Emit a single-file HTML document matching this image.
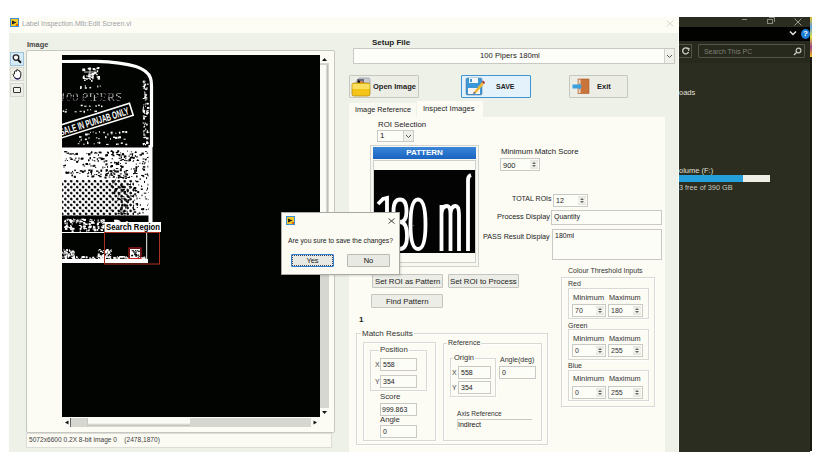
<!DOCTYPE html>
<html><head><meta charset="utf-8">
<style>
*{margin:0;padding:0;box-sizing:border-box}
html,body{width:817px;height:468px;overflow:hidden;background:#fff;font-family:"Liberation Sans",sans-serif;color:#1e1e1e}
.a{position:absolute}
.t{position:absolute;white-space:pre;line-height:10px;font-size:8px}
.box{position:absolute;background:#fdfdf8;border:1px solid #c9cac6}
.btn{position:absolute;background:#ecede6;border:1px solid #c4c5be;border-radius:1px}
.grp{position:absolute;border:1px solid #d8d9d2;box-shadow:inset 1px 1px 0 #fff, 1px 1px 0 #fff}
.spin{position:absolute;width:8px;top:1px;bottom:1px;right:1px;background:linear-gradient(#e4e6de,#f4f5ef 50%,#e4e6de)}
.spin:before{content:"";position:absolute;left:2px;top:2px;border-left:2px solid transparent;border-right:2px solid transparent;border-bottom:2px solid #666}
.spin:after{content:"";position:absolute;left:2px;bottom:2px;border-left:2px solid transparent;border-right:2px solid transparent;border-top:2px solid #666}
</style></head><body>
<!-- window -->
<div class="a" style="left:9px;top:17px;width:670px;height:16px;background:#fdfdf6"></div>
<div class="a" style="left:9px;top:33px;width:670px;height:419px;background:#eef1e7"></div><div class="a" style="left:678px;top:33px;width:1px;height:419px;background:#fafaf6"></div>
<!-- title icon -->
<svg class="a" style="left:10px;top:18px" width="9" height="9"><rect x="0" y="0" width="9" height="9" fill="#3c8ed6"/><rect x="1" y="1" width="7" height="7" fill="#f0c828"/><path d="M2 2.5 L6.5 4.5 L2 6.5 Z" fill="#202020"/><rect x="6" y="6" width="2" height="2" fill="#e06010"/></svg>
<div class="t" style="left:22px;top:19px;font-size:7px;color:#9ea2a4">Label Inspection.Mlb:Edit Screen.vi</div>
<svg class="a" style="left:666px;top:20px" width="8" height="7"><path d="M0.5 0.5 L7.5 6.5 M7.5 0.5 L0.5 6.5" stroke="#d4d4cc" stroke-width="0.9"/></svg>

<!-- dark explorer -->
<div class="a" style="left:679px;top:17px;width:131px;height:435px;background:#2a2d1f"></div>
<div class="a" style="left:679px;top:27px;width:131px;height:14px;background:#020300"></div><div class="a" style="left:679px;top:41px;width:131px;height:22px;background:#27291d"></div>
<div class="a" style="left:810px;top:17px;width:2px;height:434px;background:#1a1a10"></div><div class="a" style="left:810px;top:17px;width:2px;height:40px;background:linear-gradient(#f0c020,#60a0e0,#e0e040,#a04080,#f0c020)"></div>


<!-- explorer details -->
<div class="a" style="left:742px;top:19px;width:5px;height:1px;background:#8a8b80"></div>
<div class="a" style="left:767px;top:19px;width:6px;height:5px;border:1px solid #8a8b80"></div><div class="a" style="left:769px;top:17px;width:6px;height:5px;border-top:1px solid #8a8b80;border-right:1px solid #8a8b80"></div>
<svg class="a" style="left:794px;top:18px" width="8" height="8"><path d="M0.5 0.5 L7.5 7.5 M7.5 0.5 L0.5 7.5" stroke="#9a9b90" stroke-width="1"/></svg>
<svg class="a" style="left:789px;top:30px" width="8" height="6"><path d="M1 1.5 L4 4.5 L7 1.5" stroke="#e8e8e0" stroke-width="1.5" fill="none"/></svg>
<div class="a" style="left:801px;top:29px;width:9px;height:10px;border-radius:50%;background:#1e7fd8"></div>
<div class="t" style="left:803px;top:29px;font-size:8px;font-weight:bold;color:#fff">?</div>
<div class="a" style="left:679px;top:44px;width:13px;height:14px;border:1px solid #54554a;border-left:none;border-radius:1px"></div>
<svg class="a" style="left:682px;top:47px" width="8" height="8"><path d="M6 2 A3 3 0 1 0 6.5 5" stroke="#d0d0c8" stroke-width="1.3" fill="none"/><path d="M4.5 1 L7 1.5 L6.5 4" stroke="#d0d0c8" stroke-width="1.2" fill="none"/></svg>
<div class="a" style="left:698px;top:44px;width:107px;height:14px;border:1px solid #54554a;border-radius:1px"></div>
<div class="t" style="left:704px;top:47px;font-size:6.9px;color:#7e7f74">Search This PC</div>
<svg class="a" style="left:793px;top:47px" width="9" height="9"><circle cx="5.5" cy="3.5" r="2.4" stroke="#c8c8c0" stroke-width="1.2" fill="none"/><path d="M3.8 5.2 L1 8" stroke="#c8c8c0" stroke-width="1.4"/></svg>
<div class="t" style="left:679px;top:88px;font-size:7.5px;color:#e0e0d8">oads</div>
<div class="t" style="left:679px;top:166px;font-size:7.5px;color:#e0e0d8">olume (F:)</div>
<div class="a" style="left:679px;top:175px;width:91px;height:7px;background:#eeeee6"></div>
<div class="a" style="left:679px;top:175px;width:64px;height:7px;background:#26a0da"></div>
<div class="t" style="left:679px;top:183px;font-size:7.3px;color:#c8c8c0">3 free of 390 GB</div>
<!-- LEFT image panel -->
<div class="t" style="left:27px;top:40px;font-size:7.4px;font-weight:bold;color:#464646">Image</div>
<div class="a" style="left:10px;top:52px;width:14px;height:14px;background:#d6eaf6;border:1px solid #9cc3dc"></div>
<svg class="a" style="left:10px;top:52px" width="14" height="14"><circle cx="6" cy="5.6" r="2.8" stroke="#222" stroke-width="1.3" fill="#f8f8f8"/><path d="M8 7.8 L11 10.8" stroke="#111" stroke-width="2"/></svg>
<div class="a" style="left:10px;top:67px;width:14px;height:14px;background:#eceee6;border:1px solid #d6d7d0"></div>
<svg class="a" style="left:10px;top:67px" width="14" height="14"><path d="M4.5 7 L4.5 4.5 Q5.5 3.5 6.3 4.5 L6.3 3 Q7.2 2 8 3 L8 3.6 Q9 2.8 9.6 3.8 L9.6 4.8 Q10.5 4.3 10.8 5.3 L10.8 9 Q10.5 12 7.5 12 Q5 12 4 9.5 L3 7.5 Q3.5 6.5 4.5 7 Z" stroke="#222" stroke-width="1" fill="#fff"/><path d="M5 11 Q7.5 12.8 10 11" stroke="#302070" stroke-width="1.4" fill="none"/></svg>
<div class="a" style="left:10px;top:83px;width:14px;height:14px;background:#eceee6;border:1px solid #d6d7d0"></div>
<div class="a" style="left:13px;top:87px;width:8px;height:6px;border:1.2px solid #333;border-radius:1px;background:#f4f4ee"></div>
<div class="a" style="left:26px;top:50px;width:309px;height:383px;background:#fcfcf5;border:1px solid #c6c7c0;border-radius:2px"></div>
<div class="a" style="left:62px;top:55px;width:258px;height:362px;background:#020402"></div>

<!-- label graphic -->
<svg class="a" style="left:0;top:0" width="340" height="468" viewBox="0 0 340 468"><defs><pattern id="dots" width="4.2" height="4.2" patternUnits="userSpaceOnUse" patternTransform="rotate(45)"><circle cx="2.1" cy="2.1" r="1.35" fill="#000"/></pattern><clipPath id="lc"><rect x="62" y="55" width="258" height="362"/></clipPath></defs><g clip-path="url(#lc)"><rect x="62" y="147.5" width="90" height="68" fill="#fff"/><rect x="62" y="180" width="72" height="36" fill="url(#dots)"/><g fill="#000"><rect x="64.7" y="151.3" width="2.5" height="1.0"/><rect x="64.0" y="151.2" width="2.5" height="1.0"/></g><g fill="#000"><rect x="66.5" y="152.7" width="2.5" height="1.0"/><rect x="68.9" y="153.5" width="2.5" height="1.0"/><rect x="67.9" y="152.6" width="1.0" height="1.0"/></g><g fill="#000"><rect x="71.6" y="153.3" width="2.5" height="1.0"/><rect x="70.6" y="153.3" width="1.0" height="1.5"/></g><g fill="#000"><rect x="75.4" y="153.0" width="2.5" height="2.0"/><rect x="76.0" y="152.9" width="2.0" height="1.5"/><rect x="74.3" y="154.2" width="1.0" height="1.0"/></g><g fill="#000"><rect x="86.4" y="153.0" width="1.0" height="1.0"/><rect x="88.2" y="153.3" width="1.5" height="1.5"/><rect x="88.0" y="153.4" width="2.5" height="2.0"/></g><g fill="#000"><rect x="91.0" y="151.3" width="1.5" height="2.0"/><rect x="90.1" y="152.5" width="1.5" height="1.0"/></g><g fill="#000"><rect x="94.9" y="151.9" width="1.5" height="1.0"/><rect x="95.5" y="152.6" width="2.0" height="1.0"/><rect x="94.0" y="152.6" width="1.5" height="1.0"/></g><g fill="#000"><rect x="99.5" y="152.4" width="2.0" height="1.0"/><rect x="98.5" y="151.7" width="1.0" height="1.0"/><rect x="98.0" y="154.3" width="1.0" height="1.5"/><rect x="99.0" y="151.6" width="2.5" height="1.5"/></g><g fill="#000"><rect x="105.4" y="154.8" width="1.0" height="2.0"/><rect x="105.5" y="154.1" width="2.5" height="2.0"/></g><g fill="#000"><rect x="108.0" y="151.8" width="1.0" height="2.0"/><rect x="107.3" y="152.4" width="1.0" height="1.0"/><rect x="106.9" y="151.6" width="1.0" height="1.5"/></g><g fill="#000"><rect x="111.9" y="153.5" width="1.5" height="1.5"/><rect x="112.1" y="151.5" width="2.0" height="2.0"/></g><g fill="#000"><rect x="116.4" y="154.0" width="2.0" height="1.0"/><rect x="115.8" y="151.8" width="2.5" height="1.5"/></g><g fill="#000"><rect x="118.9" y="154.9" width="1.0" height="1.5"/><rect x="118.9" y="154.6" width="1.5" height="1.0"/></g><g fill="#000"><rect x="64.8" y="160.2" width="1.0" height="1.0"/><rect x="66.9" y="160.0" width="1.0" height="1.0"/><rect x="65.8" y="158.4" width="1.0" height="1.0"/></g><g fill="#000"><rect x="71.0" y="158.4" width="1.5" height="1.5"/><rect x="69.5" y="157.4" width="2.0" height="1.0"/><rect x="70.2" y="158.9" width="2.5" height="1.0"/></g><g fill="#000"><rect x="73.7" y="159.6" width="2.0" height="1.0"/><rect x="75.0" y="157.7" width="1.5" height="1.0"/><rect x="76.1" y="160.9" width="2.0" height="2.0"/></g><g fill="#000"><rect x="78.5" y="157.5" width="1.0" height="2.0"/><rect x="81.0" y="157.6" width="2.5" height="2.0"/><rect x="80.4" y="158.4" width="2.5" height="1.0"/><rect x="77.9" y="160.2" width="1.0" height="1.0"/></g><g fill="#000"><rect x="88.0" y="159.3" width="1.5" height="2.0"/><rect x="89.5" y="157.2" width="1.5" height="2.0"/></g><g fill="#000"><rect x="94.4" y="160.5" width="1.0" height="1.0"/><rect x="93.3" y="157.1" width="2.0" height="1.0"/><rect x="93.6" y="160.1" width="1.0" height="1.0"/><rect x="91.9" y="159.5" width="1.0" height="1.0"/></g><g fill="#000"><rect x="98.4" y="157.4" width="2.5" height="1.0"/><rect x="96.8" y="158.1" width="1.0" height="2.0"/><rect x="97.7" y="160.0" width="1.0" height="2.0"/></g><g fill="#000"><rect x="100.8" y="158.1" width="2.5" height="2.0"/><rect x="102.1" y="158.0" width="2.5" height="1.5"/><rect x="103.7" y="160.6" width="1.0" height="2.0"/><rect x="100.6" y="157.5" width="2.0" height="1.5"/></g><g fill="#000"><rect x="106.3" y="160.1" width="1.0" height="1.5"/><rect x="105.0" y="160.5" width="2.0" height="1.0"/></g><g fill="#000"></g><g fill="#000"><rect x="64.7" y="164.4" width="1.0" height="1.5"/><rect x="63.1" y="165.2" width="2.0" height="1.0"/><rect x="64.5" y="165.1" width="1.5" height="1.0"/><rect x="63.5" y="166.7" width="1.0" height="1.0"/></g><g fill="#000"><rect x="82.2" y="164.3" width="1.5" height="1.0"/><rect x="83.1" y="163.7" width="1.0" height="1.5"/><rect x="83.6" y="165.5" width="1.5" height="1.0"/></g><g fill="#000"><rect x="85.5" y="163.0" width="2.5" height="2.0"/><rect x="87.4" y="164.1" width="1.0" height="1.0"/></g><g fill="#000"><rect x="89.3" y="163.2" width="1.0" height="1.5"/><rect x="90.5" y="165.1" width="1.0" height="1.5"/></g><g fill="#000"><rect x="95.2" y="167.0" width="1.0" height="1.0"/><rect x="92.6" y="165.0" width="1.0" height="2.0"/><rect x="93.4" y="164.8" width="2.0" height="2.0"/></g><g fill="#000"><rect x="102.4" y="166.5" width="1.0" height="2.0"/><rect x="104.4" y="166.9" width="1.0" height="1.0"/></g><g fill="#000"><rect x="105.6" y="163.3" width="2.0" height="1.5"/><rect x="107.1" y="165.8" width="1.0" height="2.0"/><rect x="105.6" y="164.1" width="1.0" height="1.5"/></g><g fill="#000"><rect x="116.2" y="164.1" width="1.0" height="1.0"/><rect x="117.2" y="163.0" width="1.5" height="1.0"/></g><g fill="#000"><rect x="120.0" y="165.5" width="1.0" height="1.0"/><rect x="121.0" y="165.9" width="2.5" height="2.0"/><rect x="121.3" y="165.9" width="2.0" height="1.0"/></g><g fill="#000"><rect x="65.7" y="171.9" width="2.5" height="2.0"/><rect x="65.4" y="172.2" width="1.0" height="1.0"/><rect x="65.7" y="171.3" width="1.0" height="1.0"/></g><g fill="#000"><rect x="67.0" y="172.3" width="2.5" height="1.0"/><rect x="68.2" y="171.5" width="1.0" height="2.0"/></g><g fill="#000"><rect x="72.7" y="172.6" width="1.0" height="1.0"/><rect x="72.1" y="170.9" width="1.0" height="1.5"/><rect x="70.6" y="172.0" width="1.0" height="2.0"/></g><g fill="#000"><rect x="76.0" y="172.1" width="2.5" height="1.0"/><rect x="74.3" y="169.6" width="1.5" height="1.5"/></g><g fill="#000"><rect x="79.4" y="172.9" width="1.0" height="1.0"/><rect x="79.8" y="170.2" width="2.5" height="1.5"/></g><g fill="#000"><rect x="84.4" y="169.8" width="1.0" height="2.0"/><rect x="81.8" y="170.8" width="2.5" height="2.0"/><rect x="84.7" y="170.5" width="1.0" height="1.0"/></g><g fill="#000"><rect x="88.2" y="169.5" width="2.5" height="1.5"/><rect x="88.1" y="171.8" width="1.0" height="2.0"/></g><g fill="#000"><rect x="90.2" y="171.0" width="2.0" height="2.0"/><rect x="91.1" y="169.6" width="1.5" height="2.0"/><rect x="91.1" y="172.4" width="1.0" height="1.5"/></g><g fill="#000"><rect x="98.2" y="171.9" width="1.5" height="1.5"/><rect x="96.2" y="170.6" width="2.5" height="1.0"/><rect x="96.1" y="170.7" width="1.5" height="1.0"/></g><g fill="#000"><rect x="100.7" y="169.6" width="1.5" height="2.0"/><rect x="100.5" y="169.8" width="1.5" height="2.0"/></g><g fill="#000"><rect x="106.6" y="172.8" width="2.5" height="1.0"/><rect x="105.9" y="169.2" width="2.0" height="2.0"/><rect x="105.6" y="169.6" width="1.5" height="2.0"/></g><g fill="#000"><rect x="109.3" y="170.4" width="1.5" height="1.5"/><rect x="110.4" y="172.9" width="1.5" height="2.0"/><rect x="110.0" y="170.2" width="2.5" height="2.0"/><rect x="108.0" y="171.6" width="1.0" height="1.0"/></g><g fill="#000"><rect x="114.3" y="170.3" width="2.0" height="2.0"/><rect x="113.1" y="169.8" width="1.0" height="1.0"/><rect x="113.9" y="169.4" width="1.0" height="1.5"/></g><g fill="#000"><rect x="71.5" y="174.5" width="1.5" height="1.0"/><rect x="71.4" y="175.3" width="1.5" height="1.0"/><rect x="71.9" y="175.1" width="1.0" height="1.0"/></g><g fill="#000"><rect x="74.8" y="176.8" width="1.0" height="1.0"/><rect x="73.8" y="175.8" width="2.0" height="2.0"/></g><g fill="#000"><rect x="87.0" y="175.7" width="2.0" height="1.0"/><rect x="87.1" y="173.2" width="1.0" height="1.0"/></g><g fill="#000"><rect x="91.4" y="175.5" width="2.5" height="2.0"/><rect x="90.9" y="173.4" width="1.0" height="1.5"/></g><g fill="#000"><rect x="93.5" y="175.4" width="1.0" height="1.5"/><rect x="95.9" y="174.1" width="1.5" height="1.0"/><rect x="94.3" y="173.9" width="1.0" height="1.0"/></g><g fill="#000"><rect x="97.9" y="175.0" width="2.0" height="1.0"/><rect x="98.8" y="175.7" width="1.5" height="1.0"/><rect x="99.6" y="175.8" width="2.0" height="1.5"/><rect x="100.2" y="173.8" width="1.5" height="1.0"/></g><g fill="#000"><rect x="105.3" y="173.9" width="1.0" height="1.5"/><rect x="105.1" y="174.2" width="2.5" height="2.0"/><rect x="104.5" y="176.6" width="2.0" height="2.0"/><rect x="105.7" y="173.2" width="2.5" height="1.0"/></g><g fill="#000"><rect x="109.2" y="174.7" width="1.0" height="1.0"/><rect x="108.7" y="176.6" width="1.5" height="1.0"/></g><g fill="#000"><rect x="112.7" y="176.7" width="2.0" height="1.0"/><rect x="113.2" y="175.9" width="1.5" height="1.5"/><rect x="113.7" y="173.4" width="1.0" height="1.5"/><rect x="112.3" y="174.7" width="1.0" height="1.0"/></g><g fill="#000"><rect x="119.8" y="173.4" width="2.0" height="1.0"/><rect x="118.3" y="176.7" width="1.0" height="1.5"/><rect x="118.2" y="176.6" width="1.0" height="2.0"/><rect x="117.8" y="175.5" width="2.0" height="1.0"/></g><g fill="#000"><rect x="117.8" y="154.0" width="2.5" height="1.5"/><rect x="124.5" y="171.4" width="2.5" height="1.0"/><rect x="120.5" y="195.9" width="1.5" height="1.5"/><rect x="121.9" y="196.2" width="2.5" height="1.0"/><rect x="111.0" y="165.0" width="2.0" height="2.0"/><rect x="148.2" y="174.7" width="1.5" height="2.0"/><rect x="142.6" y="158.5" width="2.0" height="1.0"/><rect x="110.3" y="209.6" width="1.5" height="1.0"/><rect x="134.3" y="171.0" width="1.5" height="2.0"/><rect x="124.5" y="200.1" width="1.0" height="1.0"/><rect x="125.7" y="160.2" width="2.0" height="1.0"/><rect x="136.0" y="180.8" width="2.5" height="1.5"/><rect x="116.4" y="177.3" width="1.0" height="1.0"/><rect x="120.6" y="155.4" width="1.0" height="2.0"/><rect x="129.9" y="195.4" width="2.0" height="1.0"/><rect x="119.4" y="176.7" width="2.5" height="1.0"/><rect x="139.9" y="204.2" width="1.0" height="1.5"/><rect x="121.8" y="186.3" width="1.5" height="1.5"/><rect x="139.5" y="162.7" width="1.0" height="1.0"/><rect x="119.8" y="159.8" width="2.5" height="1.0"/><rect x="123.1" y="175.3" width="1.0" height="1.0"/><rect x="136.0" y="156.4" width="2.0" height="1.0"/><rect x="114.1" y="180.4" width="1.0" height="2.0"/><rect x="146.6" y="152.6" width="1.5" height="1.0"/><rect x="114.8" y="162.1" width="2.5" height="1.0"/><rect x="147.2" y="173.8" width="1.0" height="2.0"/><rect x="134.1" y="199.6" width="1.0" height="1.0"/><rect x="135.5" y="195.4" width="1.5" height="1.0"/><rect x="111.5" y="171.8" width="1.0" height="1.0"/><rect x="150.0" y="152.4" width="1.0" height="1.0"/><rect x="142.8" y="176.2" width="1.5" height="1.0"/><rect x="134.8" y="155.0" width="1.0" height="2.0"/><rect x="131.9" y="154.0" width="1.0" height="2.0"/><rect x="136.6" y="159.9" width="2.5" height="1.0"/><rect x="136.1" y="175.5" width="1.5" height="2.0"/><rect x="149.5" y="192.7" width="2.0" height="1.0"/><rect x="122.5" y="186.3" width="1.5" height="2.0"/><rect x="126.7" y="205.3" width="1.5" height="1.0"/><rect x="125.6" y="175.9" width="1.0" height="2.0"/><rect x="146.1" y="177.1" width="1.0" height="2.0"/><rect x="133.1" y="173.3" width="1.0" height="1.0"/><rect x="110.6" y="185.3" width="2.0" height="1.0"/><rect x="132.9" y="209.3" width="2.5" height="1.0"/><rect x="115.8" y="168.1" width="2.5" height="1.0"/><rect x="147.0" y="157.0" width="2.0" height="1.0"/><rect x="122.1" y="203.6" width="1.0" height="2.0"/><rect x="122.6" y="188.9" width="2.0" height="1.0"/><rect x="146.2" y="189.7" width="1.0" height="1.0"/><rect x="134.8" y="189.3" width="1.0" height="2.0"/><rect x="117.3" y="164.0" width="2.0" height="1.0"/><rect x="125.3" y="157.9" width="1.0" height="1.0"/><rect x="111.6" y="186.0" width="1.0" height="1.5"/><rect x="114.7" y="188.4" width="2.5" height="1.5"/><rect x="136.0" y="169.7" width="1.0" height="2.0"/><rect x="125.6" y="173.5" width="2.5" height="2.0"/><rect x="117.2" y="150.2" width="2.0" height="2.0"/><rect x="119.4" y="198.9" width="2.0" height="1.0"/><rect x="142.4" y="175.6" width="1.0" height="1.0"/><rect x="124.3" y="173.4" width="2.0" height="1.0"/><rect x="111.6" y="158.3" width="1.5" height="1.0"/><rect x="112.2" y="182.3" width="2.0" height="1.0"/><rect x="111.0" y="154.2" width="2.5" height="1.0"/><rect x="117.7" y="212.8" width="2.0" height="1.5"/><rect x="148.3" y="208.6" width="1.0" height="1.0"/><rect x="112.6" y="172.5" width="1.5" height="1.0"/><rect x="123.0" y="189.3" width="2.0" height="1.0"/><rect x="120.2" y="211.7" width="2.0" height="1.0"/><rect x="133.7" y="189.4" width="1.0" height="1.5"/><rect x="124.9" y="162.7" width="2.0" height="1.0"/><rect x="135.5" y="167.8" width="1.5" height="2.0"/><rect x="116.7" y="200.2" width="1.0" height="1.0"/><rect x="135.5" y="173.0" width="2.0" height="1.0"/><rect x="120.1" y="184.3" width="2.0" height="1.5"/><rect x="120.6" y="213.4" width="2.5" height="1.0"/><rect x="124.4" y="198.9" width="2.0" height="1.0"/><rect x="117.1" y="197.6" width="1.0" height="1.5"/><rect x="142.8" y="166.2" width="2.5" height="1.5"/><rect x="139.3" y="197.8" width="1.0" height="1.0"/><rect x="121.6" y="190.0" width="2.0" height="1.5"/><rect x="145.8" y="158.4" width="1.0" height="1.0"/><rect x="110.9" y="150.2" width="1.5" height="1.5"/><rect x="114.3" y="172.9" width="1.0" height="2.0"/><rect x="133.3" y="187.7" width="1.0" height="1.5"/><rect x="135.0" y="180.4" width="1.0" height="1.0"/><rect x="147.5" y="165.6" width="1.0" height="2.0"/><rect x="113.8" y="190.8" width="1.5" height="2.0"/><rect x="142.5" y="211.9" width="1.0" height="1.5"/><rect x="133.8" y="187.0" width="2.5" height="2.0"/><rect x="119.9" y="207.8" width="1.0" height="1.0"/><rect x="131.3" y="176.0" width="1.0" height="1.0"/><rect x="112.3" y="199.8" width="1.0" height="1.0"/><rect x="115.7" y="162.8" width="2.5" height="2.0"/><rect x="142.5" y="161.2" width="1.5" height="1.0"/><rect x="122.0" y="153.1" width="2.0" height="1.0"/><rect x="125.0" y="177.9" width="2.0" height="1.0"/><rect x="139.7" y="179.0" width="1.0" height="1.0"/><rect x="120.5" y="191.2" width="1.0" height="1.5"/><rect x="145.7" y="209.2" width="1.5" height="1.0"/><rect x="120.6" y="185.4" width="2.0" height="1.5"/><rect x="121.8" y="209.4" width="1.0" height="1.0"/><rect x="145.2" y="151.0" width="1.5" height="1.0"/><rect x="143.7" y="163.0" width="1.0" height="1.5"/><rect x="117.7" y="174.9" width="2.5" height="1.0"/><rect x="125.2" y="204.5" width="2.5" height="2.0"/><rect x="128.9" y="184.0" width="1.0" height="1.0"/><rect x="127.5" y="196.4" width="2.5" height="1.5"/><rect x="141.6" y="175.1" width="2.5" height="1.0"/><rect x="132.6" y="161.0" width="1.0" height="1.0"/><rect x="114.5" y="189.8" width="1.0" height="1.5"/><rect x="149.1" y="194.8" width="1.0" height="1.0"/><rect x="115.5" y="191.2" width="1.0" height="1.0"/><rect x="139.5" y="154.2" width="2.5" height="1.5"/><rect x="118.0" y="211.1" width="2.5" height="1.0"/><rect x="145.2" y="198.4" width="2.0" height="1.0"/><rect x="119.9" y="163.0" width="1.0" height="1.0"/><rect x="148.0" y="208.3" width="1.0" height="1.5"/><rect x="129.1" y="158.5" width="1.0" height="1.5"/><rect x="122.8" y="177.1" width="1.0" height="1.5"/><rect x="120.3" y="168.1" width="1.5" height="1.5"/><rect x="140.8" y="188.5" width="2.0" height="1.5"/><rect x="134.7" y="152.0" width="2.0" height="1.0"/><rect x="127.5" y="199.5" width="1.5" height="2.0"/><rect x="138.2" y="184.4" width="1.0" height="1.0"/><rect x="133.0" y="168.4" width="2.0" height="1.0"/><rect x="130.9" y="168.5" width="1.0" height="1.0"/><rect x="123.9" y="156.1" width="1.0" height="2.0"/><rect x="133.7" y="211.3" width="2.5" height="1.5"/><rect x="133.1" y="160.2" width="1.0" height="1.0"/><rect x="129.9" y="157.0" width="1.0" height="2.0"/><rect x="141.5" y="194.6" width="1.0" height="1.5"/><rect x="124.2" y="175.7" width="2.0" height="1.0"/><rect x="126.9" y="191.3" width="1.5" height="1.0"/><rect x="122.1" y="177.4" width="2.5" height="1.0"/><rect x="125.2" y="206.6" width="1.0" height="2.0"/><rect x="115.1" y="188.0" width="2.5" height="1.0"/><rect x="123.9" y="170.9" width="1.0" height="2.0"/><rect x="136.5" y="197.5" width="1.0" height="2.0"/><rect x="127.6" y="199.5" width="2.5" height="1.0"/><rect x="115.0" y="179.6" width="1.0" height="1.0"/><rect x="120.7" y="198.3" width="2.5" height="1.0"/><rect x="138.9" y="212.4" width="1.5" height="1.5"/><rect x="116.4" y="171.0" width="1.0" height="1.5"/><rect x="149.0" y="196.6" width="1.0" height="1.0"/><rect x="148.5" y="156.5" width="2.0" height="1.0"/><rect x="149.4" y="200.9" width="1.5" height="2.0"/><rect x="121.0" y="157.0" width="1.0" height="1.5"/><rect x="118.3" y="174.9" width="1.0" height="1.0"/><rect x="126.0" y="200.6" width="1.0" height="1.5"/><rect x="128.5" y="159.1" width="2.5" height="2.0"/><rect x="110.2" y="165.5" width="2.0" height="2.0"/><rect x="143.8" y="192.7" width="2.5" height="1.0"/><rect x="137.2" y="191.1" width="2.0" height="2.0"/><rect x="122.5" y="190.2" width="1.0" height="2.0"/><rect x="119.7" y="175.6" width="1.0" height="1.5"/><rect x="144.0" y="180.9" width="1.0" height="2.0"/><rect x="130.7" y="192.3" width="1.0" height="1.5"/><rect x="141.1" y="174.9" width="2.0" height="1.0"/><rect x="111.5" y="184.8" width="1.0" height="1.0"/><rect x="130.8" y="156.5" width="2.5" height="2.0"/><rect x="131.6" y="195.9" width="2.5" height="1.0"/><rect x="135.6" y="203.1" width="2.5" height="1.5"/><rect x="126.4" y="210.7" width="1.0" height="1.0"/><rect x="125.7" y="198.8" width="1.0" height="1.5"/><rect x="135.5" y="166.2" width="2.0" height="2.0"/><rect x="112.5" y="154.8" width="2.0" height="1.5"/><rect x="133.2" y="157.0" width="1.5" height="2.0"/><rect x="147.6" y="183.7" width="1.0" height="2.0"/><rect x="128.5" y="160.5" width="1.0" height="1.0"/><rect x="128.8" y="186.0" width="1.0" height="1.0"/><rect x="124.1" y="190.9" width="2.0" height="2.0"/><rect x="149.8" y="198.6" width="1.0" height="2.0"/><rect x="124.2" y="204.4" width="1.5" height="2.0"/><rect x="137.5" y="212.9" width="1.0" height="2.0"/><rect x="110.1" y="196.2" width="1.5" height="1.5"/><rect x="119.8" y="169.3" width="2.0" height="2.0"/><rect x="127.1" y="190.8" width="1.5" height="1.0"/><rect x="147.1" y="204.7" width="1.0" height="1.0"/><rect x="143.1" y="208.0" width="1.0" height="1.5"/><rect x="135.3" y="151.0" width="1.0" height="1.0"/><rect x="148.1" y="192.0" width="1.5" height="1.0"/><rect x="133.1" y="204.7" width="1.0" height="2.0"/><rect x="123.9" y="159.8" width="2.0" height="1.0"/><rect x="134.4" y="194.0" width="1.0" height="1.5"/><rect x="117.9" y="194.3" width="2.5" height="1.0"/><rect x="139.7" y="178.1" width="1.0" height="1.0"/><rect x="120.6" y="165.0" width="1.0" height="2.0"/><rect x="129.7" y="153.7" width="2.0" height="1.0"/><rect x="138.0" y="165.8" width="1.0" height="1.0"/><rect x="116.4" y="170.5" width="2.5" height="2.0"/><rect x="136.6" y="203.8" width="1.5" height="2.0"/><rect x="126.8" y="211.5" width="1.0" height="1.0"/><rect x="135.5" y="190.7" width="1.0" height="1.0"/><rect x="134.4" y="193.7" width="1.5" height="1.0"/><rect x="130.4" y="181.0" width="1.0" height="1.0"/><rect x="118.5" y="176.6" width="1.0" height="1.5"/><rect x="113.8" y="192.2" width="1.5" height="2.0"/><rect x="141.1" y="185.5" width="1.0" height="1.5"/><rect x="127.4" y="177.0" width="2.5" height="1.0"/><rect x="143.1" y="168.7" width="2.0" height="2.0"/><rect x="123.3" y="213.0" width="2.5" height="1.5"/><rect x="149.0" y="191.9" width="1.0" height="1.5"/><rect x="117.7" y="195.6" width="1.0" height="1.0"/><rect x="141.4" y="152.6" width="2.5" height="2.0"/><rect x="131.8" y="153.2" width="1.5" height="1.0"/><rect x="110.2" y="162.2" width="2.0" height="1.0"/><rect x="141.6" y="208.2" width="2.5" height="2.0"/><rect x="134.7" y="190.1" width="2.5" height="1.0"/><rect x="118.5" y="192.7" width="2.0" height="1.0"/><rect x="114.1" y="161.6" width="1.0" height="2.0"/><rect x="141.0" y="208.5" width="1.0" height="1.5"/><rect x="144.9" y="158.9" width="1.5" height="1.5"/><rect x="144.5" y="161.8" width="1.0" height="1.5"/><rect x="110.8" y="186.2" width="2.5" height="1.0"/><rect x="129.9" y="183.4" width="1.0" height="2.0"/><rect x="133.0" y="208.8" width="2.0" height="1.0"/><rect x="110.6" y="174.8" width="2.5" height="1.0"/><rect x="129.0" y="176.4" width="1.0" height="1.0"/><rect x="135.8" y="163.6" width="1.0" height="1.0"/><rect x="127.1" y="150.6" width="1.0" height="1.0"/><rect x="118.7" y="157.8" width="2.0" height="1.0"/><rect x="121.0" y="186.4" width="2.0" height="1.0"/><rect x="146.9" y="173.4" width="1.0" height="1.0"/><rect x="121.7" y="185.7" width="2.0" height="2.0"/><rect x="136.8" y="207.0" width="1.0" height="1.0"/><rect x="110.5" y="150.9" width="2.5" height="1.0"/><rect x="125.6" y="170.0" width="2.5" height="1.0"/><rect x="148.3" y="203.4" width="2.5" height="1.0"/><rect x="122.7" y="210.7" width="2.0" height="2.0"/><rect x="137.1" y="159.3" width="1.0" height="1.5"/><rect x="148.2" y="160.5" width="2.0" height="2.0"/><rect x="125.4" y="200.3" width="1.5" height="1.5"/><rect x="121.7" y="153.9" width="2.5" height="1.5"/><rect x="144.8" y="196.4" width="1.0" height="1.0"/><rect x="134.0" y="169.8" width="2.0" height="1.0"/><rect x="125.1" y="193.8" width="2.5" height="1.0"/><rect x="142.3" y="168.1" width="1.0" height="1.5"/><rect x="120.5" y="177.0" width="2.5" height="1.0"/><rect x="121.5" y="159.0" width="2.5" height="1.0"/><rect x="121.0" y="204.5" width="2.5" height="2.0"/><rect x="123.9" y="155.4" width="2.5" height="2.0"/><rect x="141.9" y="162.8" width="1.0" height="1.5"/><rect x="134.3" y="193.4" width="2.0" height="1.0"/><rect x="147.0" y="187.5" width="1.0" height="2.0"/><rect x="128.4" y="155.6" width="1.5" height="1.0"/><rect x="119.3" y="187.1" width="1.5" height="1.5"/><rect x="129.1" y="187.7" width="1.0" height="1.0"/><rect x="117.7" y="161.6" width="1.5" height="1.5"/><rect x="133.1" y="173.0" width="2.5" height="1.0"/><rect x="119.9" y="209.0" width="2.0" height="1.5"/><rect x="144.7" y="173.8" width="2.0" height="1.0"/><rect x="116.2" y="188.2" width="1.5" height="1.5"/><rect x="130.8" y="151.3" width="1.0" height="1.0"/><rect x="149.6" y="205.4" width="2.0" height="1.0"/><rect x="120.5" y="199.9" width="2.0" height="1.0"/><rect x="147.9" y="199.1" width="2.5" height="1.0"/><rect x="120.2" y="152.4" width="1.0" height="1.0"/></g><rect x="62" y="217" width="66" height="15" fill="#000"/><g fill="#fff"><rect x="64.1" y="220.5" width="2.0" height="2.0"/><rect x="66.6" y="223.5" width="1.0" height="2.0"/><rect x="66.5" y="222.4" width="1.0" height="1.5"/><rect x="64.9" y="219.8" width="1.0" height="2.0"/><rect x="64.5" y="223.2" width="1.5" height="1.0"/><rect x="66.7" y="219.7" width="1.0" height="1.5"/><rect x="66.6" y="218.8" width="2.5" height="1.0"/></g><g fill="#fff"><rect x="70.0" y="222.1" width="2.0" height="1.0"/><rect x="68.7" y="220.2" width="1.0" height="1.0"/><rect x="69.9" y="220.1" width="2.5" height="2.0"/><rect x="70.1" y="219.1" width="1.5" height="1.5"/><rect x="69.1" y="219.2" width="2.0" height="2.0"/></g><g fill="#fff"><rect x="73.0" y="218.6" width="1.0" height="1.0"/><rect x="71.7" y="223.1" width="1.0" height="1.5"/><rect x="73.6" y="219.3" width="2.0" height="1.0"/><rect x="73.7" y="220.6" width="1.0" height="1.0"/><rect x="72.5" y="220.4" width="1.0" height="2.0"/><rect x="71.6" y="220.5" width="1.5" height="1.0"/></g><g fill="#fff"><rect x="77.5" y="220.9" width="1.0" height="1.5"/><rect x="76.4" y="219.9" width="1.0" height="1.5"/><rect x="76.8" y="220.1" width="1.0" height="1.5"/><rect x="76.6" y="220.2" width="2.0" height="1.0"/><rect x="75.8" y="221.3" width="1.0" height="2.0"/><rect x="77.4" y="219.2" width="1.0" height="1.5"/></g><g fill="#fff"><rect x="79.5" y="220.6" width="2.0" height="1.0"/><rect x="79.1" y="222.5" width="1.5" height="1.0"/><rect x="81.4" y="218.6" width="2.5" height="1.5"/><rect x="80.2" y="220.9" width="2.5" height="1.5"/><rect x="79.4" y="220.9" width="2.0" height="1.0"/><rect x="79.6" y="219.5" width="1.0" height="1.0"/></g><g fill="#fff"><rect x="83.2" y="221.8" width="2.0" height="1.5"/><rect x="83.5" y="219.3" width="1.0" height="1.5"/><rect x="83.5" y="218.9" width="2.5" height="2.0"/><rect x="85.1" y="223.5" width="2.5" height="1.5"/><rect x="83.8" y="223.1" width="2.0" height="1.0"/><rect x="83.1" y="223.5" width="2.0" height="1.0"/></g><g fill="#fff"><rect x="89.3" y="220.5" width="1.0" height="1.5"/><rect x="88.7" y="223.2" width="1.5" height="2.0"/><rect x="89.7" y="218.9" width="1.5" height="1.0"/><rect x="89.3" y="223.3" width="1.5" height="2.0"/><rect x="88.7" y="223.4" width="1.5" height="1.0"/><rect x="89.7" y="221.2" width="2.5" height="1.0"/></g><g fill="#fff"><rect x="94.0" y="219.7" width="1.0" height="1.0"/><rect x="91.4" y="219.9" width="1.0" height="1.0"/><rect x="91.4" y="222.3" width="1.0" height="1.5"/><rect x="91.1" y="221.8" width="2.5" height="2.0"/><rect x="92.7" y="222.4" width="1.0" height="1.5"/><rect x="93.7" y="222.4" width="1.0" height="1.5"/><rect x="91.4" y="221.2" width="2.5" height="1.5"/><rect x="91.4" y="219.2" width="1.0" height="1.0"/></g><g fill="#fff"><rect x="97.6" y="219.4" width="1.0" height="2.0"/><rect x="97.5" y="221.8" width="2.5" height="1.0"/><rect x="96.8" y="223.7" width="1.5" height="1.5"/><rect x="96.9" y="223.1" width="2.0" height="1.5"/><rect x="97.8" y="223.2" width="1.0" height="1.5"/><rect x="97.1" y="223.8" width="1.5" height="1.0"/></g><g fill="#fff"><rect x="100.4" y="219.5" width="1.5" height="2.0"/><rect x="100.7" y="222.2" width="1.0" height="1.0"/><rect x="101.4" y="220.7" width="2.0" height="1.0"/><rect x="102.7" y="223.4" width="1.0" height="1.0"/><rect x="102.9" y="221.9" width="2.5" height="1.5"/><rect x="102.1" y="222.9" width="1.0" height="1.0"/><rect x="100.9" y="221.4" width="2.0" height="1.0"/><rect x="103.2" y="220.1" width="1.5" height="1.5"/><rect x="102.2" y="219.2" width="2.5" height="1.5"/></g><g fill="#fff"><rect x="115.5" y="222.6" width="1.5" height="2.0"/><rect x="115.1" y="221.6" width="2.0" height="1.0"/><rect x="115.0" y="220.5" width="2.5" height="1.5"/><rect x="115.2" y="221.1" width="1.5" height="1.0"/><rect x="114.0" y="219.7" width="2.5" height="2.0"/><rect x="116.3" y="220.7" width="1.5" height="1.0"/><rect x="115.9" y="219.8" width="2.5" height="1.5"/><rect x="114.8" y="220.1" width="1.0" height="1.5"/></g><g fill="#fff"><rect x="118.2" y="220.4" width="1.0" height="2.0"/><rect x="118.7" y="220.4" width="1.0" height="1.0"/><rect x="119.0" y="222.2" width="1.0" height="2.0"/><rect x="117.7" y="220.4" width="1.0" height="1.5"/><rect x="118.6" y="221.3" width="2.0" height="1.5"/></g><g fill="#fff"><rect x="125.7" y="221.7" width="2.0" height="2.0"/><rect x="126.0" y="221.6" width="2.0" height="1.5"/><rect x="125.8" y="221.8" width="2.0" height="2.0"/></g><g fill="#fff"><rect x="64.9" y="227.9" width="2.5" height="2.0"/><rect x="65.7" y="225.0" width="2.0" height="2.0"/><rect x="65.1" y="226.0" width="1.5" height="1.0"/><rect x="65.1" y="227.1" width="1.0" height="1.0"/><rect x="66.1" y="226.8" width="2.5" height="1.0"/><rect x="66.5" y="226.1" width="2.0" height="1.0"/><rect x="64.1" y="226.4" width="2.0" height="1.5"/></g><g fill="#fff"><rect x="72.0" y="227.8" width="2.5" height="2.0"/><rect x="69.8" y="227.0" width="2.5" height="1.5"/><rect x="70.1" y="225.1" width="1.0" height="1.0"/><rect x="68.8" y="227.1" width="2.0" height="1.0"/><rect x="71.6" y="230.3" width="2.0" height="2.0"/><rect x="70.0" y="228.4" width="2.5" height="1.5"/><rect x="70.9" y="229.1" width="1.0" height="1.0"/><rect x="69.7" y="227.0" width="1.0" height="1.5"/><rect x="70.3" y="225.6" width="1.5" height="1.5"/></g><g fill="#fff"><rect x="80.0" y="227.8" width="1.0" height="2.0"/><rect x="79.3" y="228.5" width="2.5" height="1.0"/><rect x="79.7" y="230.5" width="1.0" height="2.0"/><rect x="78.9" y="225.0" width="2.5" height="1.0"/><rect x="81.0" y="227.2" width="1.0" height="1.0"/><rect x="80.4" y="226.1" width="2.0" height="1.5"/></g><g fill="#fff"><rect x="83.5" y="226.1" width="2.5" height="1.0"/><rect x="83.5" y="227.9" width="2.5" height="1.0"/><rect x="83.1" y="225.4" width="2.5" height="2.0"/><rect x="86.1" y="228.4" width="1.0" height="1.0"/><rect x="85.6" y="228.2" width="1.0" height="1.0"/><rect x="84.3" y="225.9" width="1.5" height="1.0"/><rect x="86.2" y="230.2" width="1.0" height="1.5"/><rect x="83.7" y="228.4" width="1.0" height="1.0"/><rect x="83.8" y="227.2" width="1.0" height="2.0"/><rect x="83.2" y="226.3" width="1.0" height="1.0"/></g><g fill="#fff"><rect x="87.5" y="229.8" width="2.0" height="1.5"/><rect x="88.8" y="226.4" width="2.0" height="1.0"/><rect x="88.3" y="227.1" width="2.5" height="1.0"/><rect x="88.8" y="227.2" width="2.0" height="1.0"/><rect x="90.0" y="226.3" width="1.0" height="1.0"/><rect x="88.6" y="226.0" width="1.5" height="2.0"/><rect x="89.3" y="225.6" width="2.5" height="2.0"/><rect x="88.6" y="228.6" width="1.0" height="2.0"/></g><g fill="#fff"><rect x="92.9" y="226.6" width="1.0" height="2.0"/><rect x="92.5" y="228.7" width="1.5" height="1.0"/><rect x="93.1" y="225.7" width="1.0" height="1.5"/><rect x="93.9" y="229.3" width="2.5" height="2.0"/><rect x="93.7" y="229.4" width="1.0" height="1.0"/><rect x="93.4" y="226.2" width="2.0" height="2.0"/><rect x="94.1" y="228.2" width="1.5" height="2.0"/></g><g fill="#fff"><rect x="96.7" y="228.9" width="1.5" height="2.0"/><rect x="97.8" y="227.0" width="1.0" height="2.0"/><rect x="97.9" y="226.2" width="1.0" height="1.0"/><rect x="97.7" y="226.5" width="2.0" height="1.0"/><rect x="98.0" y="228.1" width="1.5" height="1.0"/><rect x="97.3" y="225.5" width="1.0" height="1.0"/></g><g fill="#fff"><rect x="101.7" y="227.0" width="2.5" height="1.5"/><rect x="100.4" y="229.0" width="1.0" height="1.0"/><rect x="100.8" y="229.5" width="2.0" height="1.5"/><rect x="101.0" y="229.6" width="2.0" height="1.0"/><rect x="102.9" y="226.0" width="1.5" height="1.5"/><rect x="102.8" y="225.1" width="2.0" height="1.0"/><rect x="103.1" y="227.2" width="1.0" height="1.0"/><rect x="100.8" y="226.5" width="2.5" height="1.0"/><rect x="102.2" y="225.2" width="1.0" height="1.0"/></g><rect x="62" y="232" width="86" height="1" fill="#fff"/><rect x="62" y="259" width="86" height="4" fill="#fff"/><g fill="#fff"><rect x="125.6" y="256.5" width="1.0" height="1.5"/><rect x="114.9" y="258.8" width="2.5" height="1.0"/><rect x="109.9" y="258.1" width="1.5" height="2.0"/><rect x="118.3" y="257.7" width="1.0" height="1.0"/><rect x="132.1" y="258.3" width="1.5" height="1.0"/><rect x="135.5" y="257.8" width="1.0" height="1.0"/><rect x="119.2" y="256.1" width="1.5" height="1.0"/><rect x="127.3" y="257.0" width="1.0" height="2.0"/><rect x="120.4" y="257.2" width="2.5" height="1.0"/><rect x="85.6" y="256.3" width="2.0" height="2.0"/><rect x="140.1" y="258.1" width="2.0" height="1.0"/><rect x="118.8" y="256.6" width="2.5" height="1.0"/><rect x="103.1" y="256.6" width="2.5" height="1.5"/><rect x="76.7" y="256.5" width="1.0" height="1.5"/><rect x="83.0" y="256.2" width="1.5" height="1.5"/><rect x="96.6" y="256.6" width="1.5" height="1.0"/><rect x="73.5" y="258.1" width="2.0" height="1.0"/><rect x="121.3" y="256.0" width="2.0" height="1.0"/><rect x="140.6" y="257.1" width="1.5" height="1.0"/><rect x="136.3" y="256.4" width="2.5" height="1.0"/><rect x="90.0" y="258.4" width="2.5" height="2.0"/><rect x="125.9" y="256.5" width="1.0" height="2.0"/><rect x="132.5" y="257.2" width="1.0" height="1.0"/><rect x="120.0" y="256.0" width="2.0" height="1.0"/><rect x="65.6" y="258.7" width="1.5" height="1.0"/><rect x="71.3" y="256.9" width="1.0" height="1.0"/><rect x="89.3" y="257.4" width="1.5" height="1.5"/><rect x="76.1" y="256.2" width="1.0" height="2.0"/><rect x="145.3" y="258.3" width="1.0" height="1.5"/><rect x="144.3" y="257.7" width="1.0" height="2.0"/><rect x="142.4" y="257.5" width="2.5" height="1.5"/><rect x="62.7" y="258.8" width="1.5" height="1.5"/><rect x="116.9" y="256.2" width="1.0" height="1.0"/><rect x="127.1" y="258.5" width="1.5" height="1.5"/><rect x="77.6" y="257.9" width="1.0" height="1.0"/><rect x="127.9" y="258.5" width="2.5" height="1.5"/><rect x="93.9" y="257.9" width="1.5" height="1.5"/><rect x="81.3" y="256.4" width="1.5" height="1.5"/><rect x="82.1" y="256.1" width="2.5" height="2.0"/><rect x="138.0" y="258.8" width="2.0" height="2.0"/><rect x="104.0" y="256.5" width="1.5" height="1.0"/><rect x="73.9" y="256.7" width="1.0" height="2.0"/><rect x="115.5" y="257.2" width="1.0" height="2.0"/><rect x="102.3" y="256.7" width="1.5" height="1.0"/><rect x="64.7" y="257.8" width="2.5" height="2.0"/><rect x="74.0" y="256.2" width="1.0" height="2.0"/><rect x="136.8" y="256.2" width="1.0" height="1.0"/><rect x="137.9" y="256.5" width="1.5" height="1.0"/><rect x="99.2" y="257.7" width="1.5" height="1.0"/><rect x="101.4" y="257.6" width="2.5" height="2.0"/><rect x="98.0" y="257.6" width="1.0" height="2.0"/><rect x="142.8" y="257.9" width="1.0" height="1.5"/><rect x="113.2" y="256.9" width="2.5" height="2.0"/><rect x="142.0" y="257.4" width="1.0" height="1.5"/><rect x="134.7" y="257.6" width="1.0" height="1.0"/><rect x="80.7" y="258.2" width="1.0" height="1.0"/><rect x="117.5" y="257.1" width="2.5" height="2.0"/><rect x="92.2" y="256.7" width="2.0" height="2.0"/><rect x="83.9" y="256.7" width="1.0" height="1.0"/><rect x="80.6" y="258.5" width="1.0" height="1.0"/><rect x="106.6" y="256.8" width="2.0" height="1.0"/><rect x="108.5" y="256.7" width="2.5" height="1.0"/><rect x="123.8" y="258.7" width="2.5" height="1.0"/><rect x="133.5" y="258.0" width="2.0" height="1.0"/><rect x="134.5" y="257.7" width="1.0" height="1.0"/><rect x="100.6" y="258.1" width="2.5" height="1.0"/><rect x="143.3" y="256.6" width="2.0" height="1.0"/><rect x="73.5" y="258.3" width="1.0" height="2.0"/><rect x="81.9" y="257.1" width="1.0" height="1.0"/><rect x="100.6" y="256.4" width="1.0" height="2.0"/><rect x="138.3" y="256.3" width="1.0" height="1.0"/><rect x="139.1" y="258.6" width="1.0" height="1.5"/><rect x="124.6" y="257.0" width="1.0" height="1.5"/><rect x="72.3" y="257.1" width="2.5" height="1.5"/><rect x="122.6" y="256.1" width="2.5" height="1.5"/></g><g fill="#fff"><rect x="63.2" y="253.4" width="2.5" height="1.0"/><rect x="62.4" y="256.3" width="1.0" height="1.5"/><rect x="66.3" y="254.6" width="1.0" height="2.0"/><rect x="63.4" y="249.2" width="1.0" height="1.0"/><rect x="71.6" y="250.5" width="2.5" height="1.5"/><rect x="72.5" y="254.4" width="1.0" height="1.5"/><rect x="68.5" y="254.5" width="1.5" height="2.0"/><rect x="62.2" y="251.7" width="1.0" height="2.0"/><rect x="68.0" y="256.0" width="1.0" height="1.0"/><rect x="64.2" y="255.5" width="2.5" height="2.0"/><rect x="72.1" y="256.7" width="2.0" height="2.0"/><rect x="64.8" y="256.7" width="2.5" height="1.0"/><rect x="66.3" y="253.2" width="1.5" height="1.0"/><rect x="69.1" y="249.3" width="1.0" height="1.5"/><rect x="70.7" y="251.7" width="2.0" height="2.0"/><rect x="73.2" y="251.5" width="1.5" height="2.0"/><rect x="66.0" y="249.2" width="2.0" height="1.0"/><rect x="69.6" y="254.8" width="1.0" height="1.5"/><rect x="66.6" y="249.5" width="1.5" height="1.5"/><rect x="68.8" y="253.2" width="1.0" height="1.0"/><rect x="73.0" y="256.2" width="1.0" height="1.0"/><rect x="71.3" y="254.1" width="1.0" height="1.5"/><rect x="71.5" y="255.3" width="1.0" height="1.0"/><rect x="70.2" y="251.4" width="1.5" height="1.5"/><rect x="68.1" y="254.1" width="1.5" height="2.0"/><rect x="66.0" y="254.6" width="1.5" height="2.0"/><rect x="68.0" y="256.2" width="1.0" height="1.5"/><rect x="63.8" y="250.6" width="2.0" height="2.0"/><rect x="67.3" y="253.5" width="1.5" height="1.0"/><rect x="69.0" y="250.2" width="1.5" height="1.5"/><rect x="70.7" y="253.4" width="1.5" height="1.0"/><rect x="73.1" y="253.7" width="1.0" height="1.0"/><rect x="65.7" y="251.8" width="2.0" height="1.5"/><rect x="73.6" y="254.5" width="1.0" height="2.0"/><rect x="65.8" y="250.4" width="1.5" height="1.0"/><rect x="71.1" y="254.0" width="1.0" height="1.0"/><rect x="64.6" y="252.2" width="1.0" height="1.5"/><rect x="72.4" y="254.2" width="1.0" height="1.0"/></g><g fill="#fff"><rect x="107.3" y="256.7" width="2.5" height="1.0"/><rect x="98.1" y="255.5" width="2.5" height="1.5"/><rect x="107.1" y="249.0" width="1.5" height="1.0"/><rect x="106.0" y="256.4" width="1.0" height="1.5"/><rect x="101.6" y="255.0" width="2.0" height="2.0"/><rect x="105.5" y="255.4" width="1.0" height="1.0"/><rect x="109.1" y="255.4" width="1.0" height="1.5"/><rect x="107.9" y="256.9" width="2.0" height="1.5"/><rect x="110.2" y="256.0" width="1.0" height="1.5"/><rect x="104.9" y="256.9" width="1.0" height="2.0"/><rect x="105.6" y="254.8" width="1.5" height="1.0"/><rect x="98.3" y="250.2" width="1.0" height="1.0"/><rect x="102.0" y="251.9" width="1.5" height="1.0"/><rect x="106.2" y="253.8" width="1.5" height="1.0"/><rect x="107.4" y="251.1" width="2.0" height="1.0"/><rect x="107.9" y="251.5" width="2.5" height="2.0"/><rect x="104.8" y="251.9" width="2.5" height="1.5"/><rect x="98.8" y="249.1" width="2.0" height="1.0"/><rect x="106.2" y="255.2" width="1.5" height="1.0"/><rect x="110.9" y="250.8" width="1.0" height="1.0"/><rect x="105.7" y="250.0" width="2.5" height="1.0"/><rect x="104.8" y="250.5" width="2.5" height="1.5"/><rect x="107.3" y="256.2" width="1.0" height="1.0"/><rect x="101.9" y="254.7" width="2.0" height="2.0"/><rect x="100.0" y="256.3" width="2.0" height="2.0"/><rect x="100.0" y="255.3" width="1.0" height="1.0"/><rect x="106.2" y="249.1" width="2.0" height="1.5"/><rect x="97.8" y="253.5" width="2.0" height="2.0"/><rect x="110.2" y="254.0" width="1.0" height="1.0"/><rect x="100.5" y="251.1" width="2.0" height="1.0"/><rect x="100.2" y="250.6" width="2.0" height="1.5"/><rect x="101.2" y="257.0" width="1.0" height="1.0"/><rect x="103.7" y="256.5" width="1.5" height="1.0"/><rect x="108.5" y="251.3" width="1.5" height="1.0"/><rect x="103.8" y="256.1" width="1.0" height="1.5"/><rect x="106.6" y="253.8" width="2.0" height="1.0"/><rect x="105.1" y="256.1" width="1.0" height="1.5"/><rect x="97.6" y="255.2" width="2.0" height="1.0"/><rect x="103.1" y="250.1" width="1.5" height="1.0"/><rect x="108.3" y="250.2" width="1.0" height="1.0"/><rect x="109.8" y="250.2" width="1.5" height="1.0"/><rect x="107.5" y="252.7" width="2.0" height="1.0"/><rect x="102.8" y="254.1" width="2.0" height="1.5"/><rect x="110.7" y="249.3" width="1.0" height="1.0"/></g><rect x="130" y="249" width="10" height="9" fill="#fff"/><g fill="#000"><rect x="137.3" y="254.8" width="1.0" height="1.0"/><rect x="135.0" y="251.6" width="2.0" height="1.0"/><rect x="136.8" y="250.3" width="1.5" height="1.0"/><rect x="138.0" y="250.8" width="2.0" height="1.0"/><rect x="135.2" y="250.0" width="1.0" height="1.0"/><rect x="136.1" y="253.8" width="1.0" height="1.5"/><rect x="137.7" y="256.7" width="1.0" height="1.5"/><rect x="138.8" y="256.0" width="1.0" height="1.0"/><rect x="133.2" y="251.2" width="1.5" height="1.5"/><rect x="131.6" y="250.3" width="2.5" height="1.0"/><rect x="134.3" y="253.9" width="1.5" height="1.5"/><rect x="131.1" y="254.8" width="2.0" height="1.5"/><rect x="135.4" y="254.8" width="1.5" height="2.0"/><rect x="134.4" y="253.8" width="2.0" height="1.0"/><rect x="134.1" y="252.7" width="2.0" height="1.0"/><rect x="138.2" y="254.4" width="1.0" height="1.5"/></g><path d="M60 61.5 L96 61.3 Q122 62 136 66.5 Q148 70.5 150.5 78 Q151.5 81 151.5 86 L151.5 147" stroke="#fff" stroke-width="3.2" fill="none"/><rect x="148.5" y="145" width="4" height="88" fill="#fff"/><rect x="146" y="233" width="1.2" height="30" fill="#fff" opacity="0.8"/><g fill="#fff"><rect x="93.1" y="76.5" width="1.0" height="1.0"/><rect x="92.6" y="68.1" width="2.5" height="1.0"/><rect x="96.5" y="67.6" width="2.5" height="1.5"/><rect x="93.0" y="72.8" width="1.5" height="2.0"/><rect x="97.5" y="67.0" width="2.0" height="1.5"/><rect x="91.5" y="79.9" width="1.0" height="2.0"/><rect x="87.7" y="67.8" width="2.5" height="1.5"/><rect x="91.8" y="75.8" width="1.5" height="1.0"/><rect x="92.1" y="74.1" width="1.0" height="1.5"/><rect x="86.2" y="77.9" width="1.5" height="2.0"/><rect x="91.1" y="80.0" width="1.0" height="1.5"/><rect x="90.4" y="73.9" width="1.5" height="1.0"/><rect x="92.8" y="69.0" width="2.0" height="1.0"/><rect x="92.2" y="77.8" width="1.0" height="1.5"/><rect x="88.1" y="77.8" width="2.0" height="1.0"/><rect x="88.6" y="76.1" width="2.0" height="1.0"/><rect x="87.8" y="75.6" width="2.5" height="1.5"/><rect x="89.2" y="68.1" width="2.0" height="1.5"/><rect x="98.0" y="76.0" width="2.0" height="2.0"/><rect x="93.7" y="69.3" width="2.5" height="1.0"/><rect x="82.1" y="68.7" width="2.0" height="1.0"/><rect x="92.0" y="73.8" width="2.0" height="1.5"/><rect x="82.3" y="69.6" width="2.5" height="1.5"/><rect x="82.9" y="69.3" width="2.5" height="1.5"/><rect x="96.7" y="70.3" width="1.5" height="2.0"/><rect x="83.5" y="75.3" width="1.0" height="1.0"/><rect x="84.1" y="79.5" width="1.5" height="1.5"/><rect x="96.7" y="76.3" width="2.0" height="1.5"/><rect x="82.7" y="76.8" width="2.0" height="2.0"/><rect x="92.4" y="77.5" width="1.5" height="1.0"/><rect x="88.2" y="74.5" width="2.5" height="1.0"/><rect x="97.6" y="78.1" width="2.5" height="1.5"/><rect x="83.0" y="69.6" width="1.0" height="1.0"/><rect x="94.1" y="71.9" width="2.5" height="2.0"/><rect x="89.9" y="78.7" width="1.0" height="1.0"/><rect x="91.5" y="73.0" width="2.0" height="2.0"/><rect x="88.6" y="73.2" width="1.0" height="2.0"/><rect x="88.4" y="68.8" width="1.0" height="1.0"/><rect x="93.8" y="72.2" width="1.0" height="1.5"/><rect x="90.9" y="77.0" width="2.0" height="1.0"/><rect x="83.4" y="78.0" width="2.5" height="1.0"/><rect x="83.6" y="68.1" width="1.0" height="2.0"/><rect x="82.9" y="75.9" width="1.5" height="2.0"/><rect x="95.8" y="74.2" width="2.0" height="1.0"/><rect x="98.0" y="77.6" width="1.0" height="1.5"/></g><path d="M84 72 L96 72 M86 76 L94 76 M90 67 L90 80" stroke="#fff" stroke-width="1" opacity="0.8"/><g fill="#fff"><rect x="80.0" y="87.5" width="1.5" height="1.5"/><rect x="80.2" y="86.0" width="1.5" height="2.0"/></g><g fill="#fff"><rect x="84.8" y="87.2" width="2.0" height="1.5"/><rect x="84.8" y="85.3" width="1.0" height="1.5"/></g><g fill="#fff"><rect x="89.1" y="87.3" width="1.5" height="1.0"/><rect x="90.2" y="86.8" width="1.0" height="1.5"/></g><g fill="#fff"><rect x="97.3" y="85.5" width="1.0" height="2.0"/></g><g fill="#fff"><rect x="99.8" y="85.5" width="1.0" height="1.0"/></g><text x="60" y="101" font-family="Liberation Serif" font-size="13" fill="#fff" textLength="62" lengthAdjust="spacingAndGlyphs" opacity="0.7">100 PIPERS</text><g fill="#000"><rect x="114.8" y="99.8" width="2.0" height="1.0"/><rect x="62.9" y="98.7" width="1.0" height="2.0"/><rect x="75.2" y="98.6" width="1.5" height="1.0"/><rect x="94.1" y="91.9" width="1.0" height="1.0"/><rect x="89.9" y="92.4" width="1.0" height="1.0"/><rect x="86.9" y="97.9" width="1.5" height="2.0"/><rect x="103.2" y="91.9" width="1.0" height="1.0"/><rect x="64.5" y="100.0" width="1.5" height="1.0"/><rect x="114.5" y="99.6" width="2.5" height="1.0"/><rect x="80.6" y="93.1" width="2.5" height="1.0"/><rect x="71.1" y="99.6" width="1.0" height="2.0"/><rect x="120.5" y="93.9" width="1.0" height="1.5"/><rect x="75.4" y="96.5" width="1.0" height="1.0"/><rect x="89.9" y="98.7" width="2.0" height="1.5"/><rect x="102.7" y="91.4" width="1.5" height="1.0"/><rect x="101.4" y="92.5" width="2.5" height="1.0"/><rect x="79.4" y="94.2" width="2.0" height="1.0"/><rect x="74.0" y="93.4" width="1.5" height="1.0"/><rect x="74.1" y="95.6" width="1.0" height="1.5"/><rect x="63.9" y="97.2" width="1.0" height="1.5"/><rect x="73.7" y="91.8" width="1.5" height="1.0"/><rect x="72.3" y="94.2" width="2.0" height="1.0"/><rect x="81.8" y="94.4" width="1.0" height="1.5"/><rect x="110.5" y="98.7" width="2.0" height="1.0"/><rect x="106.8" y="91.4" width="1.0" height="2.0"/><rect x="89.7" y="90.4" width="2.5" height="1.0"/><rect x="86.8" y="98.4" width="2.0" height="1.5"/><rect x="66.6" y="98.7" width="1.0" height="1.5"/><rect x="72.2" y="101.3" width="1.5" height="1.0"/><rect x="112.5" y="100.5" width="2.0" height="1.5"/><rect x="70.9" y="91.1" width="1.0" height="1.0"/><rect x="71.2" y="93.2" width="2.5" height="1.0"/><rect x="81.5" y="93.0" width="2.5" height="1.0"/><rect x="92.4" y="94.4" width="1.0" height="1.5"/><rect x="86.2" y="92.4" width="1.0" height="1.0"/><rect x="105.6" y="96.4" width="1.0" height="1.0"/><rect x="62.9" y="101.3" width="2.0" height="1.0"/><rect x="103.3" y="92.8" width="1.0" height="1.0"/><rect x="112.5" y="102.0" width="2.0" height="2.0"/><rect x="99.5" y="91.3" width="2.5" height="1.0"/><rect x="67.1" y="96.9" width="1.0" height="1.0"/><rect x="97.7" y="99.4" width="1.0" height="1.0"/><rect x="66.4" y="94.0" width="1.0" height="1.0"/><rect x="74.9" y="99.3" width="1.0" height="1.5"/><rect x="82.5" y="99.7" width="2.0" height="1.0"/><rect x="62.6" y="101.3" width="2.0" height="2.0"/><rect x="63.9" y="99.5" width="1.0" height="1.0"/><rect x="71.1" y="94.1" width="1.0" height="1.0"/><rect x="73.9" y="92.6" width="1.5" height="1.0"/><rect x="121.8" y="99.5" width="2.0" height="1.0"/><rect x="91.8" y="99.4" width="1.0" height="1.0"/><rect x="73.9" y="97.5" width="1.5" height="2.0"/><rect x="67.5" y="98.6" width="1.5" height="1.0"/><rect x="110.2" y="95.9" width="2.0" height="1.0"/><rect x="77.6" y="98.3" width="1.5" height="1.0"/><rect x="106.7" y="100.0" width="2.5" height="1.0"/><rect x="88.1" y="99.9" width="2.5" height="1.5"/><rect x="106.9" y="97.1" width="1.0" height="1.0"/><rect x="120.1" y="99.4" width="1.5" height="1.0"/><rect x="76.4" y="97.1" width="2.5" height="1.0"/><rect x="114.7" y="96.9" width="1.0" height="2.0"/><rect x="101.8" y="94.7" width="1.5" height="2.0"/><rect x="86.4" y="91.0" width="1.5" height="2.0"/><rect x="109.6" y="90.1" width="2.0" height="1.0"/><rect x="119.1" y="100.5" width="2.0" height="2.0"/><rect x="86.6" y="93.6" width="1.0" height="1.5"/><rect x="94.7" y="91.0" width="2.0" height="2.0"/><rect x="99.2" y="93.5" width="1.0" height="1.5"/><rect x="73.2" y="100.7" width="2.0" height="1.0"/><rect x="69.2" y="98.2" width="1.0" height="2.0"/><rect x="111.4" y="92.2" width="1.5" height="1.5"/><rect x="119.5" y="94.3" width="1.0" height="1.5"/><rect x="115.4" y="97.3" width="2.0" height="1.5"/><rect x="92.0" y="101.5" width="2.5" height="1.0"/><rect x="113.4" y="101.6" width="2.0" height="1.0"/><rect x="62.0" y="92.1" width="1.0" height="2.0"/><rect x="95.9" y="97.9" width="1.5" height="1.0"/><rect x="121.1" y="98.8" width="2.5" height="2.0"/><rect x="70.1" y="99.0" width="1.5" height="2.0"/><rect x="66.6" y="97.5" width="2.0" height="1.5"/><rect x="119.5" y="94.3" width="2.0" height="1.0"/><rect x="116.4" y="96.0" width="1.5" height="1.0"/><rect x="65.4" y="100.0" width="1.0" height="2.0"/><rect x="88.9" y="99.0" width="1.0" height="2.0"/><rect x="64.1" y="93.9" width="1.0" height="1.0"/><rect x="119.2" y="100.7" width="1.0" height="1.0"/><rect x="97.3" y="96.9" width="1.0" height="2.0"/><rect x="72.4" y="97.1" width="1.5" height="1.0"/><rect x="79.5" y="96.5" width="2.0" height="2.0"/><rect x="100.9" y="99.7" width="2.0" height="2.0"/><rect x="119.8" y="98.5" width="1.5" height="1.5"/><rect x="71.7" y="96.9" width="1.0" height="1.5"/><rect x="115.6" y="92.4" width="1.0" height="1.0"/><rect x="80.5" y="96.2" width="1.5" height="1.0"/><rect x="97.2" y="101.7" width="1.5" height="1.0"/><rect x="78.3" y="100.7" width="2.0" height="1.0"/><rect x="99.2" y="101.1" width="2.0" height="1.0"/><rect x="102.9" y="94.3" width="1.5" height="2.0"/><rect x="109.6" y="95.7" width="1.0" height="1.0"/><rect x="117.5" y="97.5" width="2.5" height="2.0"/><rect x="100.2" y="99.3" width="1.5" height="1.0"/><rect x="71.1" y="99.1" width="2.0" height="2.0"/><rect x="107.2" y="93.3" width="1.5" height="2.0"/><rect x="93.8" y="93.5" width="1.0" height="1.5"/><rect x="89.0" y="90.1" width="2.5" height="1.5"/><rect x="83.2" y="101.3" width="1.5" height="1.0"/><rect x="115.2" y="100.5" width="1.0" height="2.0"/><rect x="112.1" y="98.5" width="1.5" height="1.0"/><rect x="100.7" y="101.6" width="1.0" height="2.0"/><rect x="85.7" y="101.3" width="1.5" height="2.0"/><rect x="85.6" y="99.7" width="1.5" height="1.0"/><rect x="104.7" y="91.7" width="2.5" height="2.0"/><rect x="102.2" y="100.8" width="1.0" height="1.0"/><rect x="82.3" y="90.8" width="2.0" height="1.0"/><rect x="92.1" y="100.2" width="1.0" height="2.0"/><rect x="86.2" y="96.9" width="1.5" height="1.0"/><rect x="71.1" y="98.1" width="1.0" height="1.0"/><rect x="115.9" y="100.8" width="2.0" height="1.5"/><rect x="69.9" y="98.4" width="2.0" height="1.5"/><rect x="104.7" y="99.3" width="2.5" height="1.5"/><rect x="98.5" y="100.8" width="1.5" height="1.0"/><rect x="83.6" y="96.8" width="1.0" height="1.5"/><rect x="63.4" y="96.2" width="1.0" height="1.5"/><rect x="75.1" y="95.5" width="1.0" height="2.0"/><rect x="78.5" y="90.7" width="2.0" height="1.0"/><rect x="64.4" y="99.9" width="1.0" height="2.0"/><rect x="75.5" y="97.6" width="1.5" height="1.5"/><rect x="93.8" y="92.8" width="2.5" height="1.0"/><rect x="78.9" y="101.7" width="2.5" height="1.0"/><rect x="75.4" y="92.1" width="2.5" height="1.5"/><rect x="87.4" y="90.8" width="1.5" height="1.0"/><rect x="97.1" y="94.8" width="2.5" height="2.0"/><rect x="75.6" y="100.4" width="1.0" height="1.5"/><rect x="119.7" y="94.0" width="1.5" height="1.0"/><rect x="100.5" y="96.9" width="2.0" height="2.0"/><rect x="120.2" y="100.6" width="2.5" height="2.0"/><rect x="73.4" y="97.4" width="1.0" height="2.0"/><rect x="71.9" y="99.1" width="1.0" height="1.0"/><rect x="88.3" y="92.4" width="1.0" height="1.5"/><rect x="74.1" y="99.1" width="1.5" height="1.0"/><rect x="117.2" y="98.7" width="1.0" height="1.0"/><rect x="83.2" y="95.0" width="2.5" height="1.5"/><rect x="95.5" y="97.5" width="2.5" height="1.5"/><rect x="121.5" y="93.7" width="1.0" height="1.0"/><rect x="103.5" y="95.1" width="1.0" height="2.0"/><rect x="108.4" y="94.1" width="1.0" height="1.5"/><rect x="108.6" y="95.7" width="1.0" height="1.5"/><rect x="109.7" y="95.7" width="1.0" height="1.0"/><rect x="93.7" y="93.0" width="2.0" height="1.0"/><rect x="83.2" y="97.9" width="1.0" height="1.5"/><rect x="118.7" y="101.8" width="2.0" height="2.0"/><rect x="71.7" y="100.8" width="2.0" height="1.0"/><rect x="70.3" y="91.3" width="2.5" height="2.0"/><rect x="63.7" y="99.8" width="1.0" height="2.0"/><rect x="108.8" y="92.4" width="2.5" height="1.0"/><rect x="113.5" y="94.1" width="2.5" height="2.0"/><rect x="91.1" y="97.7" width="1.0" height="1.0"/><rect x="76.6" y="100.9" width="2.0" height="1.0"/><rect x="67.9" y="100.5" width="1.0" height="2.0"/><rect x="89.4" y="97.0" width="2.0" height="1.0"/><rect x="96.2" y="98.6" width="2.0" height="1.0"/><rect x="86.0" y="98.1" width="1.0" height="2.0"/><rect x="103.5" y="95.7" width="1.0" height="1.0"/><rect x="116.5" y="97.2" width="1.0" height="1.0"/><rect x="110.0" y="100.7" width="1.0" height="2.0"/><rect x="96.0" y="98.9" width="1.0" height="1.0"/><rect x="76.6" y="100.9" width="1.0" height="1.0"/><rect x="64.3" y="90.6" width="1.0" height="1.0"/><rect x="108.5" y="90.5" width="2.5" height="2.0"/><rect x="77.8" y="91.8" width="1.0" height="2.0"/><rect x="107.4" y="91.2" width="1.0" height="1.0"/><rect x="70.6" y="96.3" width="2.5" height="1.5"/><rect x="68.3" y="99.4" width="2.0" height="1.0"/><rect x="66.3" y="90.4" width="1.0" height="1.0"/><rect x="104.4" y="97.9" width="2.5" height="1.5"/><rect x="89.4" y="98.0" width="2.5" height="1.0"/><rect x="63.4" y="100.0" width="2.0" height="1.0"/><rect x="69.3" y="97.8" width="1.0" height="2.0"/><rect x="121.0" y="97.4" width="1.0" height="1.5"/><rect x="102.7" y="91.1" width="1.0" height="1.0"/></g><g fill="#fff"><rect x="80.7" y="104.7" width="2.0" height="1.5"/></g><g fill="#fff"><rect x="84.1" y="105.7" width="2.5" height="1.0"/></g><g fill="#fff"><rect x="88.9" y="105.6" width="1.0" height="1.0"/><rect x="89.6" y="105.8" width="1.0" height="1.0"/></g><g fill="#fff"><rect x="98.2" y="104.6" width="1.5" height="1.5"/><rect x="95.6" y="105.0" width="1.0" height="2.0"/></g><g fill="#fff"><rect x="101.0" y="105.6" width="1.5" height="1.5"/></g><g fill="#fff"><rect x="62.7" y="110.4" width="1.5" height="1.5"/></g><g fill="#fff"><rect x="65.7" y="109.2" width="1.0" height="1.0"/><rect x="64.7" y="111.1" width="2.0" height="1.5"/></g><g fill="#fff"><rect x="74.6" y="111.3" width="2.0" height="1.0"/></g><g fill="#fff"><rect x="79.6" y="110.8" width="2.0" height="1.0"/></g><g fill="#fff"><rect x="83.5" y="110.7" width="1.5" height="2.0"/></g><g fill="#fff"><rect x="86.9" y="109.5" width="1.5" height="1.0"/></g><g fill="#fff"><rect x="90.1" y="109.2" width="1.0" height="1.0"/></g><g fill="#fff"><rect x="94.5" y="110.6" width="2.5" height="1.5"/></g><g fill="#fff"><rect x="143.0" y="143.3" width="1.0" height="2.0"/><rect x="143.5" y="133.3" width="1.0" height="2.0"/><rect x="144.8" y="94.5" width="1.0" height="1.5"/><rect x="144.4" y="97.8" width="1.0" height="1.0"/><rect x="142.7" y="85.7" width="2.5" height="1.5"/><rect x="144.3" y="91.6" width="1.0" height="2.0"/><rect x="142.8" y="142.9" width="2.0" height="1.5"/><rect x="144.3" y="116.5" width="1.0" height="1.0"/><rect x="142.7" y="80.9" width="1.0" height="1.5"/><rect x="143.5" y="126.2" width="1.0" height="1.5"/><rect x="144.7" y="96.1" width="1.5" height="1.0"/><rect x="144.0" y="87.1" width="1.0" height="1.0"/><rect x="143.3" y="104.4" width="1.0" height="1.0"/><rect x="144.3" y="136.7" width="2.0" height="1.5"/><rect x="143.2" y="137.1" width="1.5" height="1.0"/><rect x="142.6" y="122.5" width="1.5" height="1.0"/><rect x="143.3" y="110.2" width="2.0" height="1.0"/><rect x="142.8" y="115.5" width="2.0" height="1.0"/><rect x="143.6" y="111.0" width="1.0" height="1.0"/><rect x="143.7" y="83.9" width="1.0" height="1.0"/><rect x="143.2" y="108.4" width="1.0" height="1.5"/><rect x="144.0" y="84.6" width="1.0" height="2.0"/><rect x="144.6" y="116.0" width="2.0" height="1.0"/><rect x="142.7" y="107.6" width="1.0" height="1.0"/><rect x="144.0" y="112.7" width="1.5" height="1.0"/><rect x="142.8" y="110.6" width="2.0" height="2.0"/><rect x="144.7" y="88.4" width="2.0" height="1.5"/><rect x="142.8" y="98.0" width="1.5" height="1.0"/><rect x="142.8" y="143.0" width="2.0" height="1.5"/><rect x="143.0" y="80.7" width="2.5" height="1.0"/><rect x="144.3" y="124.0" width="1.0" height="1.0"/><rect x="144.7" y="122.5" width="1.0" height="1.5"/><rect x="142.9" y="131.4" width="1.5" height="1.0"/><rect x="144.9" y="103.5" width="1.0" height="1.0"/><rect x="142.5" y="109.3" width="1.0" height="2.0"/><rect x="143.1" y="82.3" width="2.0" height="1.0"/><rect x="144.8" y="99.5" width="1.5" height="1.0"/><rect x="145.1" y="105.7" width="1.0" height="1.0"/><rect x="143.5" y="111.0" width="1.0" height="2.0"/><rect x="143.5" y="134.6" width="2.0" height="1.0"/><rect x="144.2" y="93.8" width="2.0" height="1.0"/><rect x="143.4" y="130.2" width="1.5" height="1.0"/><rect x="145.2" y="128.4" width="1.0" height="2.0"/><rect x="143.0" y="106.4" width="1.0" height="1.5"/><rect x="144.6" y="95.3" width="1.0" height="1.0"/><rect x="144.2" y="96.5" width="2.0" height="2.0"/><rect x="144.1" y="125.6" width="1.0" height="1.5"/><rect x="143.2" y="87.7" width="2.0" height="1.0"/><rect x="145.0" y="143.9" width="1.0" height="1.5"/><rect x="145.0" y="83.6" width="1.0" height="2.0"/><rect x="143.0" y="117.5" width="2.0" height="2.0"/><rect x="143.2" y="116.5" width="1.0" height="1.0"/><rect x="145.2" y="97.2" width="2.0" height="1.0"/></g><g fill="#fff"><rect x="145.9" y="98.5" width="1.5" height="1.0"/><rect x="146.9" y="106.9" width="2.5" height="2.0"/><rect x="146.8" y="131.7" width="2.5" height="1.0"/><rect x="146.4" y="112.0" width="2.5" height="1.5"/><rect x="146.9" y="141.6" width="1.0" height="2.0"/><rect x="146.0" y="137.4" width="2.5" height="2.0"/><rect x="146.1" y="124.3" width="1.5" height="1.0"/><rect x="146.3" y="141.2" width="1.5" height="1.0"/><rect x="146.7" y="83.7" width="2.0" height="1.0"/><rect x="146.6" y="131.2" width="1.0" height="2.0"/><rect x="146.4" y="123.4" width="1.0" height="2.0"/><rect x="147.0" y="130.3" width="1.0" height="2.0"/><rect x="146.0" y="142.1" width="2.5" height="2.0"/><rect x="146.3" y="88.6" width="1.0" height="1.5"/><rect x="146.7" y="103.0" width="2.0" height="1.5"/><rect x="146.0" y="94.2" width="1.0" height="1.5"/><rect x="146.0" y="112.6" width="2.0" height="2.0"/><rect x="146.6" y="110.1" width="2.0" height="1.5"/><rect x="146.5" y="102.8" width="2.0" height="1.5"/><rect x="146.1" y="110.8" width="1.0" height="1.0"/><rect x="146.3" y="87.5" width="1.5" height="1.0"/></g><g fill="#fff"><rect x="85.1" y="133.5" width="2.5" height="2.0"/><rect x="87.2" y="133.6" width="2.5" height="1.0"/></g><g fill="#fff"><rect x="90.0" y="131.8" width="1.0" height="1.0"/></g><g fill="#fff"><rect x="92.7" y="131.5" width="1.0" height="1.0"/></g><g fill="#fff"><rect x="95.5" y="132.4" width="1.0" height="1.5"/></g><g fill="#fff"><rect x="98.9" y="131.2" width="1.0" height="1.5"/></g><g fill="#fff"><rect x="103.3" y="131.8" width="1.5" height="1.5"/></g><g fill="#fff"><rect x="107.4" y="133.4" width="1.0" height="2.0"/></g><g fill="#fff"><rect x="111.3" y="133.4" width="1.0" height="1.0"/><rect x="110.6" y="131.6" width="2.0" height="2.0"/></g><g fill="#fff"><rect x="115.3" y="132.7" width="1.0" height="1.0"/></g><g fill="#fff"><rect x="118.9" y="131.7" width="1.5" height="2.0"/></g><g fill="#fff"><rect x="122.0" y="131.1" width="2.5" height="1.5"/></g><g fill="#fff"><rect x="125.5" y="131.6" width="1.5" height="1.5"/><rect x="125.3" y="131.2" width="2.0" height="1.5"/></g><g fill="#fff"><rect x="79.0" y="136.2" width="2.5" height="1.5"/></g><g fill="#fff"><rect x="80.7" y="138.8" width="1.0" height="2.0"/></g><g fill="#fff"><rect x="84.9" y="138.6" width="2.0" height="1.5"/></g><g fill="#fff"><rect x="88.2" y="137.5" width="1.5" height="1.0"/></g><g fill="#fff"><rect x="98.2" y="138.2" width="1.5" height="1.0"/><rect x="95.9" y="137.4" width="1.5" height="1.0"/></g><g fill="#fff"><rect x="105.0" y="136.2" width="1.5" height="2.0"/></g><g fill="#fff"><rect x="110.0" y="138.2" width="1.0" height="1.5"/></g><g fill="#fff"><rect x="114.9" y="136.9" width="2.5" height="2.0"/><rect x="113.1" y="136.5" width="2.0" height="1.5"/></g><g fill="#fff"><rect x="119.0" y="136.3" width="2.0" height="2.0"/><rect x="117.8" y="136.6" width="1.5" height="2.0"/></g><g fill="#fff"><rect x="123.6" y="138.7" width="2.0" height="1.0"/></g><g fill="#fff"><rect x="77.8" y="143.2" width="1.5" height="1.0"/><rect x="79.2" y="141.2" width="1.0" height="1.0"/></g><g fill="#fff"><rect x="83.1" y="143.7" width="1.5" height="1.0"/></g><g fill="#fff"><rect x="87.0" y="142.1" width="1.5" height="2.0"/><rect x="87.1" y="141.3" width="1.0" height="1.0"/></g><g fill="#fff"><rect x="93.7" y="143.3" width="1.0" height="1.0"/></g><g fill="#fff"><rect x="98.8" y="141.8" width="1.5" height="2.0"/><rect x="97.5" y="141.9" width="1.0" height="1.5"/></g><g fill="#fff"><rect x="106.1" y="143.9" width="2.5" height="1.0"/></g><g fill="#fff"><rect x="116.0" y="143.5" width="1.5" height="1.5"/></g><g fill="#fff"><rect x="117.6" y="143.4" width="1.0" height="1.5"/></g><g fill="#fff"><rect x="120.8" y="142.4" width="2.0" height="1.5"/></g><g fill="#fff"><rect x="125.3" y="143.7" width="2.0" height="1.5"/></g><g transform="translate(57,133) rotate(-17.5)"><rect x="0" y="-6.5" width="78" height="12.5" fill="none" stroke="#fff" stroke-width="1.6"/><text x="3" y="3.8" font-family="Liberation Sans" font-weight="bold" font-size="10.5" fill="#fff" textLength="72" lengthAdjust="spacingAndGlyphs">SALE IN PUNJAB ONLY</text></g></g><rect x="104.5" y="222" width="56.5" height="10" fill="#fff"/><text x="106" y="230.3" font-family="Liberation Sans" font-weight="bold" font-size="9" fill="#000" textLength="54" lengthAdjust="spacingAndGlyphs">Search Region</text><rect x="104.5" y="232.5" width="55" height="31.5" fill="none" stroke="#b03020" stroke-width="1"/><rect x="129" y="248" width="12" height="10.5" fill="none" stroke="#d02020" stroke-width="1"/></svg>
<!-- /label graphic -->
<!-- v scrollbar -->
<div class="a" style="left:320px;top:55px;width:9px;height:362px;background:#d6d7d0"></div>
<div class="a" style="left:320px;top:55px;width:9px;height:8px;background:#fbfbf6"></div>
<svg class="a" style="left:320px;top:55px" width="9" height="8"><path d="M2 6 L4.5 3 L7 6 Z" fill="#111"/></svg>
<div class="a" style="left:320px;top:64px;width:9px;height:176px;background:linear-gradient(90deg,#fbfbf6 0,#fbfbf6 60%,#b8b9b2 85%,#e8e8e2 100%);border-top:1px solid #d0d1ca;border-bottom:1px solid #b8b9b2"></div>
<div class="a" style="left:320px;top:408px;width:9px;height:9px;background:#fbfbf6"></div>
<svg class="a" style="left:320px;top:408px" width="9" height="9"><path d="M2 3 L4.5 6 L7 3 Z" fill="#111"/></svg>
<!-- h scrollbar -->
<div class="a" style="left:62px;top:418px;width:258px;height:9px;background:#d6d7d0"></div>
<div class="a" style="left:62px;top:418px;width:8px;height:9px;background:#fbfbf6"></div>
<svg class="a" style="left:62px;top:418px" width="8" height="9"><path d="M6.5 2.5 L3 4.5 L6.5 6.5 Z" fill="#111"/></svg>
<div class="a" style="left:70px;top:418px;width:1px;height:9px;background:#666"></div>
<div class="a" style="left:87px;top:418px;width:103px;height:9px;background:linear-gradient(180deg,#fbfbf6 0,#fbfbf6 55%,#c0c1ba 85%,#e8e8e2 100%);border-left:1px solid #c8c9c2"></div>
<div class="a" style="left:311px;top:418px;width:9px;height:9px;background:#fbfbf6"></div>
<svg class="a" style="left:311px;top:418px" width="9" height="9"><path d="M2.5 2.5 L6 4.5 L2.5 6.5 Z" fill="#111"/></svg>
<!-- status -->
<div class="a" style="left:26px;top:433px;width:306px;height:15px;background:#fbfbf4;border:1px solid #dcddd6"></div>
<div class="t" style="left:29px;top:435px;font-size:6.6px;color:#404040">5072x6600 0.2X 8-bit image 0    (2478,1870)</div>

<!-- RIGHT panel -->
<div class="t" style="left:372px;top:38px;font-size:8px;font-weight:bold;color:#222">Setup File</div>
<div class="a" style="left:353px;top:48px;width:322px;height:16px;background:#fdfdf9;border:1px solid #c8c9c2"></div>
<div class="a" style="left:664px;top:49px;width:10px;height:14px;background:#f0f1ea;border-left:1px solid #d0d1ca"></div>
<svg class="a" style="left:666px;top:54px" width="7" height="5"><path d="M1 1 L3.5 3.5 L6 1" stroke="#555" stroke-width="1" fill="none"/></svg>
<div class="t" style="left:480px;top:51px;font-size:7.7px;color:#222">100 Pipers 180ml</div>
<!-- buttons -->
<div class="btn" style="left:349px;top:75px;width:70px;height:23px;background:#eceee6;border-color:#c6c7c0"></div>
<div class="t" style="left:373px;top:82px;font-size:7.5px;font-weight:bold;color:#222">Open Image</div>
<div class="btn" style="left:461px;top:75px;width:70px;height:23px;background:#e3f2fb;border-color:#3f94d4"></div>
<div class="t" style="left:496px;top:82px;font-size:7px;font-weight:bold;color:#222">SAVE</div>
<div class="btn" style="left:569px;top:75px;width:59px;height:23px;background:#eceee6;border-color:#c6c7c0"></div>
<div class="t" style="left:597px;top:82px;font-size:7.5px;font-weight:bold;color:#222">Exit</div>
<svg class="a" style="left:351px;top:76px" width="21" height="21" viewBox="0 0 21 21">
<path d="M5 6 L8 2 L18 2 L19 4 L19 8 L5 8 Z" fill="#c8ccd0" stroke="#9aa0a8" stroke-width="0.8"/>
<rect x="6" y="3" width="7" height="6" fill="#6a6a80"/><path d="M7 4 L11 6 L7 8 Z" fill="#101010"/><rect x="9" y="5" width="3" height="3" fill="#d08050"/>
<rect x="1" y="7" width="18" height="13" rx="2" fill="#f4c418" stroke="#b88a10" stroke-width="0.8"/>
<rect x="1.5" y="8" width="17" height="5" fill="#fbe060"/>
</svg>
<svg class="a" style="left:465px;top:77px" width="20" height="19" viewBox="0 0 20 19">
<rect x="1" y="1" width="16" height="17" rx="1.5" fill="#3a98d8" stroke="#5a7890" stroke-width="0.6"/>
<rect x="4" y="1" width="9" height="5" fill="#f4f8fa"/><rect x="5" y="2" width="2" height="3" fill="#3a98d8"/>
<rect x="3" y="11" width="12" height="6" fill="#f4f2f0"/>
<path d="M9 15 L17 5 L19 7 L11 16 Z" fill="#f0b830"/><path d="M17 5 L18 3.5 L20 5.5 L19 7 Z" fill="#b02030"/><path d="M9 15 L8 17 L11 16 Z" fill="#303030"/>
</svg>
<svg class="a" style="left:572px;top:78px" width="19" height="17" viewBox="0 0 19 17">
<rect x="6" y="1" width="11" height="14.5" fill="#c8743a" stroke="#a85a28" stroke-width="0.6"/>
<rect x="6.5" y="1.5" width="2" height="13.5" fill="#f0d8c8"/>
<rect x="0.5" y="6.5" width="7" height="4" fill="#3aa0dc"/><path d="M7 5 L10 8.5 L7 12 Z" fill="#3aa0dc"/>
</svg>
<!-- tabs -->
<div class="a" style="left:349px;top:103px;width:67px;height:14px;background:#fafaf3"></div>
<div class="t" style="left:355px;top:105px;font-size:7.3px;color:#222">Image Reference</div>
<div class="a" style="left:417px;top:101px;width:66px;height:17px;background:#fcfcf5"></div>
<div class="t" style="left:423px;top:104px;font-size:7.6px;color:#222">Inspect Images</div>
<div class="a" style="left:349px;top:117px;width:316px;height:335px;background:#fcfcf5"></div>

<!-- TAB content -->
<div class="t" style="left:378px;top:120px;font-size:7.8px;color:#222">ROI Selection</div>
<div class="box" style="left:377px;top:130px;width:37px;height:12px"></div>
<div class="a" style="left:403px;top:131px;width:10px;height:10px;background:#eeefe8;border-left:1px solid #d0d1ca"></div>
<div class="t" style="left:380px;top:131px;font-size:8px;color:#222">1</div><svg class="a" style="left:405px;top:134px" width="7" height="5"><path d="M1 1 L3.5 3.5 L6 1" stroke="#555" stroke-width="1" fill="none"/></svg>
<!-- pattern panel -->
<div class="a" style="left:370px;top:145px;width:109px;height:122px;background:#f8f8f2;border:1px solid #d2d3cc"></div>
<div class="a" style="left:373px;top:147px;width:103px;height:12px;background:linear-gradient(#3a86d8,#1a64c0)"></div>
<div class="t" style="left:373px;top:148px;width:103px;text-align:center;font-size:8px;font-weight:bold;color:#fff">PATTERN</div>
<div class="a" style="left:373px;top:160px;width:103px;height:103px;background:#fbfbf4;border:1px solid #d0d1ca"></div>
<div class="a" style="left:374px;top:170px;width:101px;height:83px;background:#020302"></div>

<!-- pattern img -->
<svg class="a" style="left:374px;top:170px" width="101" height="83" viewBox="374 170 101 83">
<defs><filter id="rough" x="-10%" y="-10%" width="120%" height="120%"><feTurbulence type="fractalNoise" baseFrequency="0.9" numOctaves="1" seed="3"/><feDisplacementMap in="SourceGraphic" scale="1.6"/></filter></defs>
<g fill="none" stroke="#fff" stroke-width="3.8" filter="url(#rough)">
<path d="M378 204 L383 199 L387 198 L387 250"/>
<path d="M400 199.5 Q393.5 199.5 393.5 211 Q393.5 222 400 222 Q406.5 222 406.5 211 Q406.5 199.5 400 199.5 Z M400 222 Q393 222 393 236 Q393 249 400 249 Q407 249 407 236 Q407 222 400 222 Z"/>
<path d="M418 199.5 Q410.5 199.5 410.5 224.5 Q410.5 249 418 249 Q425.5 249 425.5 224.5 Q425.5 199.5 418 199.5 Z"/>
<path d="M441.5 251 L441.5 205 M441.5 214 Q442 206 447 206 Q450.5 206 450.5 215 L450.5 251 M450.5 214 Q451 206 455.5 206 Q459 206 459 215 L459 251"/>
<path d="M468 251 L468 180 Q468 176 471 175"/>
</g>
</svg>
<div class="t" style="left:501px;top:147px;font-size:7.8px;color:#222">Minimum Match Score</div>
<div class="box" style="left:500px;top:158px;width:40px;height:13px"><div class="spin"></div></div>
<div class="t" style="left:503px;top:161px;font-size:7.5px;color:#222">900</div>

<div class="t" style="left:512px;top:194px;font-size:7px;color:#222">TOTAL ROIs</div>
<div class="box" style="left:553px;top:194px;width:35px;height:13px"><div class="spin"></div></div>
<div class="t" style="left:556px;top:196px;font-size:7px;color:#222">12</div>

<div class="t" style="left:497px;top:212px;font-size:7.4px;color:#222">Process Display</div>
<div class="box" style="left:551px;top:210px;width:111px;height:15px"></div>
<div class="t" style="left:554px;top:212px;font-size:7px;color:#222">Quantity</div>

<div class="t" style="left:483px;top:232px;font-size:7.2px;color:#222">PASS Result Display</div>
<div class="box" style="left:552px;top:229px;width:110px;height:31px"></div>
<div class="t" style="left:555px;top:231px;font-size:7px;color:#222">180ml</div>

<div class="btn" style="left:372px;top:274px;width:71px;height:14px"></div>
<div class="t" style="left:375px;top:277px;font-size:7.8px;color:#222">Set ROI as Pattern</div>
<div class="btn" style="left:448px;top:274px;width:71px;height:14px"></div>
<div class="t" style="left:450px;top:277px;font-size:7.8px;color:#222">Set ROI to Process</div>
<div class="btn" style="left:371px;top:294px;width:72px;height:14px"></div>
<div class="t" style="left:386px;top:297px;font-size:7.8px;color:#222">Find Pattern</div>

<div class="t" style="left:359px;top:315px;font-size:8px;font-weight:bold;color:#222">1</div>

<!-- match results -->
<div class="grp" style="left:356px;top:333px;width:192px;height:112px"></div>
<div class="t" style="left:361px;top:329px;font-size:8px;color:#333;background:#fcfcf5;padding:0 1px">Match Results</div>
<div class="grp" style="left:363px;top:342px;width:73px;height:99px"></div>
<div class="grp" style="left:370px;top:350px;width:57px;height:41px"></div>
<div class="t" style="left:379px;top:345px;font-size:7.8px;color:#333;background:#fcfcf5;padding:0 1px">Position</div>
<div class="t" style="left:375px;top:360px;font-size:7px;color:#444">X</div>
<div class="box" style="left:380px;top:358px;width:37px;height:13px"></div>
<div class="t" style="left:383px;top:360px;font-size:7px;color:#222">558</div>
<div class="t" style="left:375px;top:377px;font-size:7px;color:#444">Y</div>
<div class="box" style="left:380px;top:375px;width:37px;height:13px"></div>
<div class="t" style="left:383px;top:377px;font-size:7px;color:#222">354</div>
<div class="t" style="left:380px;top:392px;font-size:7.8px;color:#333">Score</div>
<div class="box" style="left:380px;top:403px;width:37px;height:13px"></div>
<div class="t" style="left:382px;top:405px;font-size:7px;color:#222">999.863</div>
<div class="t" style="left:380px;top:415px;font-size:7.8px;color:#333">Angle</div>
<div class="box" style="left:380px;top:425px;width:37px;height:13px"></div>
<div class="t" style="left:383px;top:427px;font-size:7px;color:#222">0</div>

<div class="grp" style="left:443px;top:343px;width:99px;height:98px"></div>
<div class="t" style="left:447px;top:338px;font-size:7px;color:#333;background:#fcfcf5;padding:0 1px">Reference</div>
<div class="grp" style="left:450px;top:358px;width:46px;height:39px"></div>
<div class="t" style="left:453px;top:353px;font-size:7.5px;color:#333;background:#fcfcf5;padding:0 1px">Origin</div>
<div class="t" style="left:452px;top:368px;font-size:7px;color:#444">X</div>
<div class="box" style="left:458px;top:366px;width:33px;height:13px"></div>
<div class="t" style="left:461px;top:368px;font-size:7px;color:#222">558</div>
<div class="t" style="left:452px;top:383px;font-size:7px;color:#444">Y</div>
<div class="box" style="left:458px;top:381px;width:33px;height:13px"></div>
<div class="t" style="left:461px;top:383px;font-size:7px;color:#222">354</div>
<div class="t" style="left:500px;top:355px;font-size:7px;color:#333">Angle(deg)</div>
<div class="box" style="left:499px;top:366px;width:37px;height:13px"></div>
<div class="t" style="left:502px;top:368px;font-size:7px;color:#222">0</div>
<div class="t" style="left:457px;top:409px;font-size:6.6px;color:#333">Axis Reference</div>
<div class="a" style="left:457px;top:419px;width:75px;height:11px;border-top:1px solid #c8c9c2;border-left:1px solid #d8d9d2"></div>
<div class="t" style="left:458px;top:420px;font-size:7px;color:#111">Indirect</div>

<!-- colour threshold -->
<div class="t" style="left:568px;top:266px;font-size:7px;color:#333">Colour Threshold Inputs</div>
<div class="grp" style="left:561px;top:277px;width:94px;height:130px"></div>
<div class="t" style="left:568px;top:279px;font-size:7px;color:#333">Red</div>
<div class="grp" style="left:568px;top:288px;width:81px;height:31px"></div>
<div class="t" style="left:573px;top:293px;font-size:7.7px;color:#333">Minimum</div>
<div class="t" style="left:609px;top:293px;font-size:7.3px;color:#333">Maximum</div>
<div class="box" style="left:572px;top:304px;width:34px;height:13px"><div class="spin"></div></div><div class="t" style="left:575px;top:306px;font-size:7px;color:#333">70</div>
<div class="box" style="left:608px;top:304px;width:35px;height:13px"><div class="spin"></div></div><div class="t" style="left:611px;top:306px;font-size:7px;color:#333">180</div>
<div class="t" style="left:568px;top:321px;font-size:7px;color:#333">Green</div>
<div class="grp" style="left:568px;top:329px;width:81px;height:31px"></div>
<div class="t" style="left:573px;top:334px;font-size:7.7px;color:#333">Minimum</div>
<div class="t" style="left:609px;top:334px;font-size:7.3px;color:#333">Maximum</div>
<div class="box" style="left:572px;top:344px;width:34px;height:13px"><div class="spin"></div></div><div class="t" style="left:575px;top:346px;font-size:7px;color:#333">0</div>
<div class="box" style="left:608px;top:344px;width:35px;height:13px"><div class="spin"></div></div><div class="t" style="left:611px;top:346px;font-size:7px;color:#333">255</div>
<div class="t" style="left:568px;top:361px;font-size:7px;color:#333">Blue</div>
<div class="grp" style="left:568px;top:370px;width:81px;height:31px"></div>
<div class="t" style="left:573px;top:374px;font-size:7.7px;color:#333">Minimum</div>
<div class="t" style="left:609px;top:374px;font-size:7.3px;color:#333">Maximum</div>
<div class="box" style="left:572px;top:386px;width:34px;height:13px"><div class="spin"></div></div><div class="t" style="left:575px;top:388px;font-size:7px;color:#333">0</div>
<div class="box" style="left:608px;top:386px;width:35px;height:13px"><div class="spin"></div></div><div class="t" style="left:611px;top:388px;font-size:7px;color:#333">255</div>

<!-- dialog -->
<div class="a" style="left:281px;top:212px;width:119px;height:63px;background:#fbfbf3;border:1px solid #a9aaa3;box-shadow:1px 1px 2px rgba(0,0,0,.15)"></div>
<svg class="a" style="left:286px;top:216px" width="9" height="9"><rect x="0" y="0" width="9" height="9" fill="#3c8ed6"/><rect x="1" y="1" width="7" height="7" fill="#f0c828"/><path d="M2 2.5 L6.5 4.5 L2 6.5 Z" fill="#202020"/><rect x="6" y="6" width="2" height="2" fill="#e06010"/></svg>
<svg class="a" style="left:388px;top:218px" width="7" height="6"><path d="M0.5 0.5 L6.5 5.5 M6.5 0.5 L0.5 5.5" stroke="#333" stroke-width="0.9"/></svg>
<div class="t" style="left:288px;top:236px;font-size:6.8px;color:#222">Are you sure to save the changes?</div>
<div class="btn" style="left:291px;top:254px;width:43px;height:13px;border:1px solid #2f7fd0;background:#e8e9e2"></div>
<div class="a" style="left:292px;top:255px;width:41px;height:11px;border:1px dotted #445"></div>
<div class="t" style="left:291px;top:256px;width:43px;text-align:center;font-size:7.5px;color:#222">Yes</div>
<div class="btn" style="left:347px;top:254px;width:43px;height:13px;background:#e8e9e2;border-color:#b8b9b2"></div>
<div class="t" style="left:347px;top:256px;width:43px;text-align:center;font-size:7.5px;color:#111">No</div>
</body></html>
